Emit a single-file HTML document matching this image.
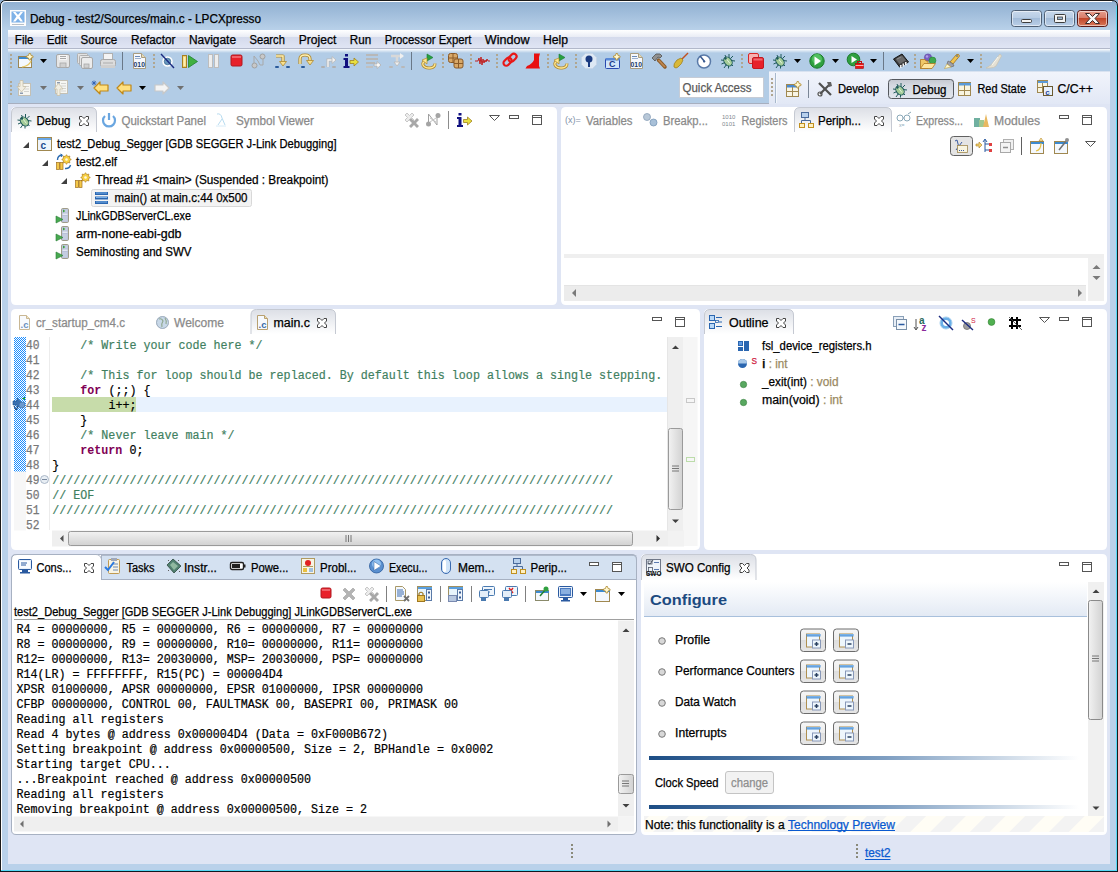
<!DOCTYPE html>
<html><head><meta charset="utf-8"><title>Debug - test2/Sources/main.c - LPCXpresso</title>
<style>html,body{margin:0;padding:0;width:1118px;height:872px;overflow:hidden;background:#b9d1ea}svg text{white-space:pre}</style>
</head><body><svg width="1118" height="872" viewBox="0 0 1118 872" style="display:block"><defs><linearGradient id="gTitle" x1="0" y1="0" x2="0" y2="1"><stop offset="0" stop-color="#8eaed0"/><stop offset="1" stop-color="#bad2ea"/></linearGradient><linearGradient id="gMenu" x1="0" y1="0" x2="0" y2="1"><stop offset="0" stop-color="#ffffff"/><stop offset="0.385" stop-color="#e9ecf5"/><stop offset="0.39" stop-color="#d4daec"/><stop offset="1" stop-color="#e0e5f4"/></linearGradient><linearGradient id="gTbTop" x1="0" y1="0" x2="0" y2="1"><stop offset="0" stop-color="#fbfcfe"/><stop offset="1" stop-color="#b2cce6"/></linearGradient><linearGradient id="gTabSel" x1="0" y1="0" x2="0" y2="1"><stop offset="0" stop-color="#dcdfe6"/><stop offset="1" stop-color="#ffffff"/></linearGradient><linearGradient id="gTabAct" x1="0" y1="0" x2="0" y2="1"><stop offset="0" stop-color="#d4e2f2"/><stop offset="1" stop-color="#d4e2f2"/></linearGradient><linearGradient id="gCfg" x1="0" y1="0" x2="0" y2="1"><stop offset="0" stop-color="#ffffff"/><stop offset="1" stop-color="#e3eaf4"/></linearGradient><linearGradient id="gSepBar" x1="0" y1="0" x2="1" y2="0"><stop offset="0" stop-color="#1c4d85"/><stop offset="0.55" stop-color="#7f9fc2"/><stop offset="1" stop-color="#ffffff"/></linearGradient><linearGradient id="gBtn" x1="0" y1="0" x2="0" y2="1"><stop offset="0" stop-color="#f6f6f6"/><stop offset="0.5" stop-color="#ececec"/><stop offset="0.5" stop-color="#dedede"/><stop offset="1" stop-color="#e6e6e6"/></linearGradient><linearGradient id="gThumbV" x1="0" y1="0" x2="1" y2="0"><stop offset="0" stop-color="#f2f2f2"/><stop offset="1" stop-color="#d2d2d2"/></linearGradient><linearGradient id="gThumbH" x1="0" y1="0" x2="0" y2="1"><stop offset="0" stop-color="#f2f2f2"/><stop offset="1" stop-color="#d2d2d2"/></linearGradient><linearGradient id="gWinBtn" x1="0" y1="0" x2="0" y2="1"><stop offset="0" stop-color="#c9d9ec"/><stop offset="0.5" stop-color="#b6cbe3"/><stop offset="0.5" stop-color="#a3bcd9"/><stop offset="1" stop-color="#bcd0e8"/></linearGradient><linearGradient id="gClose" x1="0" y1="0" x2="0" y2="1"><stop offset="0" stop-color="#e8a090"/><stop offset="0.5" stop-color="#d67a66"/><stop offset="0.5" stop-color="#c2462a"/><stop offset="1" stop-color="#d87a5c"/></linearGradient><linearGradient id="gPersp" x1="0" y1="0" x2="0" y2="1"><stop offset="0" stop-color="#f1f4fb"/><stop offset="1" stop-color="#e1e7f5"/></linearGradient><linearGradient id="gPBtn" x1="0" y1="0" x2="0" y2="1"><stop offset="0" stop-color="#c4c8d0"/><stop offset="0.3" stop-color="#d4d8e0"/><stop offset="1" stop-color="#e2e6ee"/></linearGradient><pattern id="pHatch" width="2" height="2" patternUnits="userSpaceOnUse"><rect width="2" height="2" fill="#ffffff"/><rect width="1" height="1" fill="#1a8cff"/><rect x="1" y="1" width="1" height="1" fill="#1a8cff"/></pattern><pattern id="pStripe" width="28" height="28" patternUnits="userSpaceOnUse" patternTransform="rotate(45)"><rect width="28" height="28" fill="#f3f3f3"/><rect width="14" height="28" fill="#fffdf5"/></pattern></defs><rect x="0" y="0" width="1118" height="872" fill="#b9d1ea" /><rect x="0" y="0" width="1118" height="31" fill="url(#gTitle)" /><path d="M0.5,872 L0.5,6 Q0.5,0.5 6,0.5 L1112,0.5 Q1117.5,0.5 1117.5,6 L1117.5,872" fill="none" stroke="#1a1a1a" stroke-width="1" /><line x1="0" y1="871.5" x2="1118" y2="871.5" stroke="#101820" stroke-width="1" /><line x1="1.5" y1="6" x2="1.5" y2="871" stroke="#eaf2fb" stroke-width="1" /><path d="M1.5,871 L1.5,6 Q1.5,1.5 6,1.5 L1112,1.5" fill="none" stroke="#ffffff" stroke-width="1" /><line x1="1116.5" y1="6" x2="1116.5" y2="871" stroke="#55d8f5" stroke-width="1" /><line x1="1" y1="870.5" x2="1117" y2="870.5" stroke="#55d8f5" stroke-width="1" /><rect x="10" y="10" width="16" height="16" fill="#fdfdfd" /><rect x="11.5" y="11.5" width="13" height="11" fill="#7eb2e8" /><path d="M13,12 L15.5,12 L18,15 L20.5,12 L23,12 L19.5,16.5 L23,21.5 L20.5,21.5 L18,18.5 L15.5,21.5 L13,21.5 L16.5,16.5 Z" fill="#fff" /><line x1="12" y1="24.5" x2="24" y2="24.5" stroke="#b8c0c8" stroke-width="1" /><text x="30" y="23" font-family='"Liberation Sans", sans-serif' font-size="12" fill="#000" font-weight="normal" textLength="231" lengthAdjust="spacingAndGlyphs" stroke="#000" stroke-width="0.25" >Debug - test2/Sources/main.c - LPCXpresso</text><rect x="1011.5" y="10.5" width="30" height="16" fill="url(#gWinBtn)" stroke="#4f6075" stroke-width="1" rx="3" /><rect x="1012.5" y="11.5" width="28" height="14" fill="none" stroke="rgba(255,255,255,0.55)" stroke-width="1" rx="2" /><rect x="1044.5" y="10.5" width="30" height="16" fill="url(#gWinBtn)" stroke="#4f6075" stroke-width="1" rx="3" /><rect x="1045.5" y="11.5" width="28" height="14" fill="none" stroke="rgba(255,255,255,0.55)" stroke-width="1" rx="2" /><rect x="1077.5" y="10.5" width="30" height="16" fill="url(#gClose)" stroke="#5a1a18" stroke-width="1" rx="3" /><rect x="1078.5" y="11.5" width="28" height="14" fill="none" stroke="rgba(255,255,255,0.55)" stroke-width="1" rx="2" /><rect x="1021.5" y="19.5" width="10" height="3" fill="#f4f4f4" stroke="#3c3c3c" stroke-width="1" rx="1" /><rect x="1054.5" y="14.5" width="11" height="8" fill="#f4f4f4" stroke="#3c3c3c" stroke-width="1" rx="1" /><rect x="1057.5" y="17" width="5" height="2.5" fill="#9bb4d0" stroke="#3c3c3c" stroke-width="0.8" /><path d="M1085.5,13.5 L1089.5,13.5 L1092.5,16.5 L1095.5,13.5 L1099.5,13.5 L1095,18.5 L1099.5,23.5 L1095.5,23.5 L1092.5,20.5 L1089.5,23.5 L1085.5,23.5 L1090,18.5 Z" fill="#f6f6f6" stroke="#3a2a2a" stroke-width="1" /><rect x="8" y="30" width="1102" height="18" fill="url(#gMenu)" /><line x1="8" y1="48.5" x2="1110" y2="48.5" stroke="#b2b8ca" stroke-width="1" /><text x="14.8" y="43.5" font-family='"Liberation Sans", sans-serif' font-size="12" fill="#000" font-weight="normal" textLength="18.7" lengthAdjust="spacingAndGlyphs" stroke="#000" stroke-width="0.25" >File</text><text x="46.7" y="43.5" font-family='"Liberation Sans", sans-serif' font-size="12" fill="#000" font-weight="normal" textLength="20.3" lengthAdjust="spacingAndGlyphs" stroke="#000" stroke-width="0.25" >Edit</text><text x="80.5" y="43.5" font-family='"Liberation Sans", sans-serif' font-size="12" fill="#000" font-weight="normal" textLength="36.7" lengthAdjust="spacingAndGlyphs" stroke="#000" stroke-width="0.25" >Source</text><text x="131.0" y="43.5" font-family='"Liberation Sans", sans-serif' font-size="12" fill="#000" font-weight="normal" textLength="44.5" lengthAdjust="spacingAndGlyphs" stroke="#000" stroke-width="0.25" >Refactor</text><text x="188.9" y="43.5" font-family='"Liberation Sans", sans-serif' font-size="12" fill="#000" font-weight="normal" textLength="47.2" lengthAdjust="spacingAndGlyphs" stroke="#000" stroke-width="0.25" >Navigate</text><text x="249.5" y="43.5" font-family='"Liberation Sans", sans-serif' font-size="12" fill="#000" font-weight="normal" textLength="35.4" lengthAdjust="spacingAndGlyphs" stroke="#000" stroke-width="0.25" >Search</text><text x="298.8" y="43.5" font-family='"Liberation Sans", sans-serif' font-size="12" fill="#000" font-weight="normal" textLength="37.5" lengthAdjust="spacingAndGlyphs" stroke="#000" stroke-width="0.25" >Project</text><text x="349.8" y="43.5" font-family='"Liberation Sans", sans-serif' font-size="12" fill="#000" font-weight="normal" textLength="21.4" lengthAdjust="spacingAndGlyphs" stroke="#000" stroke-width="0.25" >Run</text><text x="384.7" y="43.5" font-family='"Liberation Sans", sans-serif' font-size="12" fill="#000" font-weight="normal" textLength="86.8" lengthAdjust="spacingAndGlyphs" stroke="#000" stroke-width="0.25" >Processor Expert</text><text x="484.8" y="43.5" font-family='"Liberation Sans", sans-serif' font-size="12" fill="#000" font-weight="normal" textLength="44.7" lengthAdjust="spacingAndGlyphs" stroke="#000" stroke-width="0.25" >Window</text><text x="543.0" y="43.5" font-family='"Liberation Sans", sans-serif' font-size="12" fill="#000" font-weight="normal" textLength="25.1" lengthAdjust="spacingAndGlyphs" stroke="#000" stroke-width="0.25" >Help</text><rect x="8" y="49" width="1102" height="55" fill="#b2cce6" /><rect x="8" y="49" width="1102" height="4" fill="url(#gTbTop)" /><line x1="8" y1="103.5" x2="769" y2="103.5" stroke="#a7afbf" stroke-width="1" /><path d="M769,106 L769,72 L1110,72 L1110,106 Z" fill="url(#gPersp)" /><line x1="769" y1="71.5" x2="1110" y2="71.5" stroke="#d8e2f0" stroke-width="1" /><line x1="775.5" y1="73" x2="775.5" y2="103" stroke="#a8b8cc" stroke-width="1" /><line x1="776.5" y1="73" x2="776.5" y2="103" stroke="#f4f8fc" stroke-width="1" /><rect x="8" y="104" width="1102" height="760" fill="#dfe5f4" /><path d="M11,300 L11,112 Q11,107 16,107 L552,107 Q557,107 557,112 L557,300 Q557,305 552,305 L16,305 Q11,305 11,300 Z" fill="#fff" /><path d="M561,300 L561,112 Q561,107 566,107 L1102,107 Q1107,107 1107,112 L1107,300 Q1107,305 1102,305 L566,305 Q561,305 561,300 Z" fill="#fff" /><path d="M11,545 L11,314 Q11,309 16,309 L695,309 Q700,309 700,314 L700,545 Q700,550 695,550 L16,550 Q11,550 11,545 Z" fill="#fff" /><path d="M704,545 L704,314 Q704,309 709,309 L1102,309 Q1107,309 1107,314 L1107,545 Q1107,550 1102,550 L709,550 Q704,550 704,545 Z" fill="#fff" /><path d="M11.5,830 L11.5,559 Q11.5,554.5 16,554.5 L632,554.5 Q636.5,554.5 636.5,559 L636.5,830 Q636.5,834.5 632,834.5 L16,834.5 Q11.5,834.5 11.5,830 Z" fill="#fff" stroke="#a7b1c2" stroke-width="1" /><path d="M641,830 L641,559 Q641,554 646,554 L1102,554 Q1107,554 1107,559 L1107,830 Q1107,835 1102,835 L646,835 Q641,835 641,830 Z" fill="#fff" /><rect x="10" y="54" width="2" height="2" fill="#b0a690" /><rect x="10" y="58" width="2" height="2" fill="#b0a690" /><rect x="10" y="62" width="2" height="2" fill="#b0a690" /><rect x="10" y="66" width="2" height="2" fill="#b0a690" /><g transform="translate(18,53)" ><rect x="0.5" y="3.5" width="13" height="11" fill="#f4f8fd" stroke="#9a8654" stroke-width="1"/><rect x="1" y="4" width="12" height="2" fill="#3c8ad0"/><path d="M4,14 Q11,13 13,8" fill="none" stroke="#e8c860" stroke-width="1.2" /><path d="M11,0.5 L12.5,0.5 L13,2.5 L15,3 L15,4.5 L13,5 L12.5,7 L11,7 L10.5,5 L8.5,4.5 L8.5,3 L10.5,2.5 Z" fill="#fff8d0" stroke="#b08a30" stroke-width="0.8" /></g><path d="M40,59 L47,59 L43.5,63 Z" fill="#000" /><g transform="translate(55,53)" ><rect x="1.5" y="1.5" width="13" height="13" fill="#e6e6e6" stroke="#a8a8a8" stroke-width="1" rx="1.5"/><rect x="4" y="2" width="8" height="5" fill="#f6f6f6"/><line x1="5" y1="3.5" x2="11" y2="3.5" stroke="#a8a8a8" stroke-width="1"/><line x1="5" y1="5.5" x2="11" y2="5.5" stroke="#a8a8a8" stroke-width="1"/><rect x="5" y="10" width="6" height="4.5" fill="#d0d0d0" stroke="#a8a8a8" stroke-width="0.8"/></g><g transform="translate(77,53)" ><rect x="0.5" y="0.5" width="10" height="10" fill="#e2e2e2" stroke="#b0b0b0" stroke-width="1" rx="1"/><rect x="2.5" y="2.5" width="10" height="10" fill="#e6e6e6" stroke="#b0b0b0" stroke-width="1" rx="1"/><rect x="4.5" y="4.5" width="11" height="11" fill="#ececec" stroke="#a8a8a8" stroke-width="1" rx="1.5"/><rect x="7" y="11" width="5" height="4" fill="#d0d0d0" stroke="#a8a8a8" stroke-width="0.8"/></g><g transform="translate(100,53)" ><rect x="3.5" y="0.5" width="9" height="6" fill="#f4f4f4" stroke="#b0b0b0" stroke-width="1"/><rect x="0.5" y="6.5" width="15" height="7" fill="#dcdcdc" stroke="#a8a8a8" stroke-width="1" rx="2"/><rect x="3" y="9" width="10" height="2" fill="#c4c4c4"/><rect x="1" y="12" width="14" height="3" fill="#cfcfcf"/></g><line x1="122.5" y1="52" x2="122.5" y2="70" stroke="#6a7888" stroke-width="1" /><g transform="translate(132,53)" ><path d="M1.5,0.5 L9.5,0.5 L13.5,4.5 L13.5,15.5 L1.5,15.5 Z" fill="#f6f8fc" stroke="#a89c80" stroke-width="1" /><path d="M9.5,0.5 L9.5,4.5 L13.5,4.5" fill="#e8dcb8" stroke="#a89c80" stroke-width="1" /><line x1="3" y1="3.5" x2="8" y2="3.5" stroke="#6a8ab8" stroke-width="1"/><line x1="3" y1="5.5" x2="9" y2="5.5" stroke="#9ab0d0" stroke-width="1"/><text x="1.6" y="14.2" font-family='"Liberation Sans", sans-serif' font-size="6.8" fill="#1a3a6a" font-weight="bold">010</text></g><rect x="153" y="54" width="2" height="2" fill="#b0a690" /><rect x="153" y="58" width="2" height="2" fill="#b0a690" /><rect x="153" y="62" width="2" height="2" fill="#b0a690" /><rect x="153" y="66" width="2" height="2" fill="#b0a690" /><g transform="translate(160,53)" ><circle cx="7.5" cy="8.5" r="4.5" fill="#e8f0f6" stroke="#ffffff" stroke-width="1.5"/><circle cx="7.5" cy="8.5" r="3.2" fill="#6a9ac0" stroke="#3c6a90" stroke-width="0.8"/><line x1="1" y1="1" x2="14" y2="15" stroke="#1a2a80" stroke-width="1.4"/></g><g transform="translate(182,53)" ><rect x="0.5" y="2.5" width="4" height="12" fill="#f0d070" stroke="#a88020" stroke-width="1"/><rect x="1.5" y="4" width="2" height="9" fill="#fff0b0"/><path d="M6.5,2.5 L15.5,8.5 L6.5,14.5 Z" fill="#40b040" stroke="#208030" stroke-width="0.8" /></g><g transform="translate(208,53)" ><rect x="0.5" y="1.5" width="4" height="13" fill="#eeeeee" stroke="#bdbdbd" stroke-width="1"/><rect x="6.5" y="1.5" width="4" height="13" fill="#eeeeee" stroke="#bdbdbd" stroke-width="1"/></g><g transform="translate(230.5,54.5)" ><rect x="0.5" y="0.5" width="11" height="11" fill="#e8202a" stroke="#b01820" stroke-width="1" rx="1.5"/><rect x="1.5" y="1.5" width="9" height="2" fill="#f06068"/></g><g transform="translate(251,53)" ><circle cx="3.5" cy="12.5" r="2.5" fill="#c8c8c8" stroke="#a0a0a0" stroke-width="1"/><circle cx="11.5" cy="3.5" r="2.5" fill="#c8c8c8" stroke="#a0a0a0" stroke-width="1"/><path d="M3,10 L3,3 L7,8 L9,12 L12,12 L12,6" fill="none" stroke="#a8a8a8" stroke-width="1" /></g><g transform="translate(275,53)" ><path d="M1,3 L8,3 L8,9" fill="none" stroke="#b08a30" stroke-width="3.2" stroke-linejoin="round"/><path d="M1,3 L8,3 L8,9" fill="none" stroke="#fff0b0" stroke-width="1.4" /><path d="M4.5,8.5 L11.5,8.5 L8,13 Z" fill="#f8e090" stroke="#b08a30" stroke-width="0.8" /><rect x="0" y="13" width="4" height="2" fill="#2a5a9a" rx="1"/><rect x="11" y="13" width="4" height="2" fill="#2a5a9a" rx="1"/></g><g transform="translate(298,53)" ><path d="M2,11 L2,6 Q2,2 7,2 Q12,2 12,6 L12,8" fill="none" stroke="#b08a30" stroke-width="3.2" /><path d="M2,11 L2,6 Q2,2 7,2 Q12,2 12,6 L12,8" fill="none" stroke="#fff0b0" stroke-width="1.4" /><path d="M8.5,7.5 L15.5,7.5 L12,12 Z" fill="#f8e090" stroke="#b08a30" stroke-width="0.8" /><rect x="3" y="13" width="4" height="2" fill="#2a5a9a" rx="1"/></g><g transform="translate(321,53)" ><path d="M7,14 L7,7 L12,7" fill="none" stroke="#b8b8b8" stroke-width="3" /><path d="M7,14 L7,7 L12,7" fill="none" stroke="#f4f4f4" stroke-width="1.4" /><path d="M11,3.5 L15,7 L11,10.5 Z" fill="#f4f4f4" stroke="#b8b8b8" stroke-width="0.8" /><rect x="0" y="13" width="4" height="2" fill="#b0b0b0" rx="1"/><rect x="11" y="13" width="4" height="2" fill="#b0b0b0" rx="1"/></g><g transform="translate(343,53)" ><rect x="2" y="1" width="3" height="2.5" fill="#101080"/><path d="M0.5,5 L5,5 L5,13 L6.5,13 L6.5,15 L0.5,15 L0.5,13 L2,13 L2,7 L0.5,7 Z" fill="#101080" /><path d="M7,7.5 L11,7.5 L11,5 L15.5,9 L11,13 L11,10.5 L7,10.5 Z" fill="#e8e040" stroke="#a08020" stroke-width="0.8" /></g><g transform="translate(366,53)" ><rect x="0" y="1" width="12" height="2" fill="#b8b8b8"/><rect x="0" y="5" width="12" height="2" fill="#b8b8b8"/><rect x="0" y="9" width="9" height="2" fill="#b8b8b8"/><rect x="0" y="13" width="7" height="2" fill="#c0c0c0"/><path d="M8,11 L11,11 L11,8.5 L15,12 L11,15.5 L11,13 L8,13 Z" fill="#f8f8f8" stroke="#b0b0b0" stroke-width="0.8" /></g><g transform="translate(389,53)" ><path d="M2,3 L14,3" fill="none" stroke="#d8d8d8" stroke-width="2.5" /><path d="M8,3 L8,10" fill="none" stroke="#d8d8d8" stroke-width="2.5" /><path d="M5,9 L11,9 L8,13 Z" fill="#f0f0f0" stroke="#b8b8b8" stroke-width="0.8" /><path d="M11,0 L15,3 L11,6 Z" fill="#f0f0f0" /><rect x="0" y="13" width="4" height="2" fill="#b8b8b8" rx="1"/><rect x="12" y="13" width="4" height="2" fill="#b8b8b8" rx="1"/></g><line x1="411.5" y1="52" x2="411.5" y2="70" stroke="#6a7888" stroke-width="1" /><g transform="translate(421,53)" ><path d="M6,1 L12,4.5 L6,8 Z" fill="#28a040" stroke="#1a7a30" stroke-width="0.6" /><path d="M5,8 Q1,9 2,12 Q4,15.5 9,15 Q14,14.5 14,10.5" fill="none" stroke="#b08a30" stroke-width="3" /><path d="M5,8 Q1,9 2,12 Q4,15.5 9,15 Q14,14.5 14,10.5" fill="none" stroke="#ffe890" stroke-width="1.4" /><path d="M1,7 L6,5 L6,11 Z" fill="#ffe890" stroke="#b08a30" stroke-width="0.7" /></g><rect x="442" y="54" width="2" height="2" fill="#b0a690" /><rect x="442" y="58" width="2" height="2" fill="#b0a690" /><rect x="442" y="62" width="2" height="2" fill="#b0a690" /><rect x="442" y="66" width="2" height="2" fill="#b0a690" /><g transform="translate(448,53)" ><rect x="0.5" y="0.5" width="9" height="9" fill="#d8a868" stroke="#8a5a28" stroke-width="1" rx="2"/><line x1="0.5" y1="5" x2="9.5" y2="5" stroke="#8a5a28" stroke-width="1"/><line x1="5" y1="0.5" x2="5" y2="9.5" stroke="#8a5a28" stroke-width="1"/><rect x="6.0" y="6.0" width="9" height="9" fill="#d8a868" stroke="#8a5a28" stroke-width="1" rx="2"/><line x1="6.0" y1="10.5" x2="15.0" y2="10.5" stroke="#8a5a28" stroke-width="1"/><line x1="10.5" y1="6.0" x2="10.5" y2="15.0" stroke="#8a5a28" stroke-width="1"/></g><rect x="470" y="54" width="2" height="2" fill="#b0a690" /><rect x="470" y="58" width="2" height="2" fill="#b0a690" /><rect x="470" y="62" width="2" height="2" fill="#b0a690" /><rect x="470" y="66" width="2" height="2" fill="#b0a690" /><g transform="translate(475,53)" ><path d="M0,8 L3,8 L4,5 L5,11 L6,4 L7,12 L8,6 L9,10 L10,7 L11,9 L12,6 L13,8 L15,8" fill="none" stroke="#c02020" stroke-width="1" /></g><rect x="496" y="54" width="2" height="2" fill="#b0a690" /><rect x="496" y="58" width="2" height="2" fill="#b0a690" /><rect x="496" y="62" width="2" height="2" fill="#b0a690" /><rect x="496" y="66" width="2" height="2" fill="#b0a690" /><g transform="translate(502,53)" ><rect x="1" y="6" width="9" height="5.5" fill="none" stroke="#e81818" stroke-width="2.2" rx="2.75" transform="rotate(-45 5.5 8.75)"/><rect x="6" y="2" width="9" height="5.5" fill="none" stroke="#e81818" stroke-width="2.2" rx="2.75" transform="rotate(-45 10.5 4.75)"/></g><g transform="translate(525,53)" ><path d="M9,0.5 L15,0.5 L14,4 L14,13 L15,15.5 L0.5,15.5 L2,13 Q7,11 9,7 Z" fill="#e81010" /></g><rect x="547" y="54" width="2" height="2" fill="#b0a690" /><rect x="547" y="58" width="2" height="2" fill="#b0a690" /><rect x="547" y="62" width="2" height="2" fill="#b0a690" /><rect x="547" y="66" width="2" height="2" fill="#b0a690" /><g transform="translate(553,53)" ><path d="M6,1 L12,4.5 L6,8 Z" fill="#28a040" stroke="#1a7a30" stroke-width="0.6" /><path d="M5,8 Q1,9 2,12 Q4,15.5 9,15 Q14,14.5 14,10.5" fill="none" stroke="#b08a30" stroke-width="3" /><path d="M5,8 Q1,9 2,12 Q4,15.5 9,15 Q14,14.5 14,10.5" fill="none" stroke="#ffe890" stroke-width="1.4" /><path d="M1,7 L6,5 L6,11 Z" fill="#ffe890" stroke="#b08a30" stroke-width="0.7" /></g><rect x="575" y="54" width="2" height="2" fill="#b0a690" /><rect x="575" y="58" width="2" height="2" fill="#b0a690" /><rect x="575" y="62" width="2" height="2" fill="#b0a690" /><rect x="575" y="66" width="2" height="2" fill="#b0a690" /><g transform="translate(581,53)" ><path d="M4.5,0.5 L11.5,0.5 L15.5,4.5 L15.5,11.5 L11.5,15.5 L4.5,15.5 L0.5,11.5 L0.5,4.5 Z" fill="#dde8f4" stroke="#c4d2e4" stroke-width="0.8" /><circle cx="8" cy="6" r="3.5" fill="#1a3a80"/><rect x="7" y="8" width="2" height="6" fill="#1a3a80"/></g><g transform="translate(605,53)" ><rect x="0.5" y="5.5" width="14" height="10" fill="#d0e4f8" stroke="#2a4ab0" stroke-width="1" rx="1"/><rect x="1" y="5" width="14" height="2.5" fill="#5a8ad8"/><text x="4" y="14" font-family='"Liberation Sans", sans-serif' font-size="9" fill="#1a3a8a" font-weight="bold">C</text><path d="M11,0.5 L12.5,0.5 L13,2.5 L15,3 L15,4.5 L13,5 L12.5,7 L11,7 L10.5,5 L8.5,4.5 L8.5,3 L10.5,2.5 Z" fill="#fff8d0" stroke="#b08a30" stroke-width="0.8" /></g><g transform="translate(629,53)" ><path d="M1.5,0.5 L9.5,0.5 L13.5,4.5 L13.5,15.5 L1.5,15.5 Z" fill="#f6f8fc" stroke="#a89c80" stroke-width="1" /><path d="M9.5,0.5 L9.5,4.5 L13.5,4.5" fill="#e8dcb8" stroke="#a89c80" stroke-width="1" /><line x1="3" y1="3.5" x2="8" y2="3.5" stroke="#6a8ab8" stroke-width="1"/><line x1="3" y1="5.5" x2="9" y2="5.5" stroke="#9ab0d0" stroke-width="1"/><text x="1.6" y="14.2" font-family='"Liberation Sans", sans-serif' font-size="6.8" fill="#1a3a6a" font-weight="bold">010</text></g><g transform="translate(651,53)" ><path d="M7.5,7 L14,14" fill="none" stroke="#8a5a28" stroke-width="3.5" stroke-linecap="round"/><path d="M7.5,7 L14,14" fill="none" stroke="#c08850" stroke-width="1.8" /><path d="M1,5 L5,1 L9,1 L11,3 L9,5 L7,4 L4,8 Z" fill="#909090" stroke="#505050" stroke-width="0.8" /></g><g transform="translate(673,53)" ><line x1="9" y1="6" x2="15" y2="0" stroke="#c05020" stroke-width="1.5"/><path d="M1,14 Q0,11 4,7 L8,5 L10,7 Q9,11 5,14 Q3,16 1,14 Z" fill="#d8b838" stroke="#a08020" stroke-width="0.8" /></g><g transform="translate(696,53)" ><circle cx="8" cy="8.5" r="6.5" fill="#ffffff" stroke="#5a7aa8" stroke-width="1.5"/><line x1="4" y1="3" x2="9" y2="9" stroke="#3a5a90" stroke-width="1.5"/><circle cx="8" cy="8.5" r="1" fill="#3a5a90"/></g><g transform="translate(720,53)" ><line x1="1" y1="7" x2="5" y2="7.5" stroke="#1f5a5a" stroke-width="1"/><line x1="1.5" y1="11" x2="5" y2="9.5" stroke="#1f5a5a" stroke-width="1"/><line x1="4" y1="15" x2="6.5" y2="11.5" stroke="#1f5a5a" stroke-width="1"/><line x1="9" y1="1" x2="9" y2="5" stroke="#1f5a5a" stroke-width="1"/><line x1="5" y1="2" x2="6.5" y2="5.5" stroke="#1f5a5a" stroke-width="1"/><line x1="15" y1="8" x2="11" y2="7.5" stroke="#1f5a5a" stroke-width="1"/><line x1="13" y1="13" x2="10.5" y2="10.5" stroke="#1f5a5a" stroke-width="1"/><line x1="8.5" y1="15.5" x2="8.5" y2="11.5" stroke="#1f5a5a" stroke-width="1"/><line x1="13" y1="3" x2="10.5" y2="5.5" stroke="#1f5a5a" stroke-width="1"/><ellipse cx="8" cy="8.5" rx="3.6" ry="5" transform="rotate(-40 8 8.5)" fill="#a4cc98" stroke="#1f5a5a" stroke-width="1"/><line x1="6.5" y1="6" x2="10" y2="10.5" stroke="#e4f4dc" stroke-width="1"/><circle cx="5.5" cy="5.5" r="1.2" fill="#1f5a5a"/></g><rect x="741" y="54" width="2" height="2" fill="#b0a690" /><rect x="741" y="58" width="2" height="2" fill="#b0a690" /><rect x="741" y="62" width="2" height="2" fill="#b0a690" /><rect x="741" y="66" width="2" height="2" fill="#b0a690" /><g transform="translate(748,53)" ><rect x="0.5" y="0.5" width="10" height="10" fill="#f8b0b0" stroke="#d82828" stroke-width="1" rx="1.5"/><rect x="4.5" y="4.5" width="11" height="11" fill="#e8202a" stroke="#c01820" stroke-width="1" rx="1.5"/><rect x="5.5" y="5.5" width="9" height="2" fill="#f06870"/></g><g transform="translate(772,53)" ><line x1="1" y1="7" x2="5" y2="7.5" stroke="#1f5a5a" stroke-width="1"/><line x1="1.5" y1="11" x2="5" y2="9.5" stroke="#1f5a5a" stroke-width="1"/><line x1="4" y1="15" x2="6.5" y2="11.5" stroke="#1f5a5a" stroke-width="1"/><line x1="9" y1="1" x2="9" y2="5" stroke="#1f5a5a" stroke-width="1"/><line x1="5" y1="2" x2="6.5" y2="5.5" stroke="#1f5a5a" stroke-width="1"/><line x1="15" y1="8" x2="11" y2="7.5" stroke="#1f5a5a" stroke-width="1"/><line x1="13" y1="13" x2="10.5" y2="10.5" stroke="#1f5a5a" stroke-width="1"/><line x1="8.5" y1="15.5" x2="8.5" y2="11.5" stroke="#1f5a5a" stroke-width="1"/><line x1="13" y1="3" x2="10.5" y2="5.5" stroke="#1f5a5a" stroke-width="1"/><ellipse cx="8" cy="8.5" rx="3.6" ry="5" transform="rotate(-40 8 8.5)" fill="#a4cc98" stroke="#1f5a5a" stroke-width="1"/><line x1="6.5" y1="6" x2="10" y2="10.5" stroke="#e4f4dc" stroke-width="1"/><circle cx="5.5" cy="5.5" r="1.2" fill="#1f5a5a"/></g><path d="M794,59 L801,59 L797.5,63 Z" fill="#000" /><g transform="translate(809,53)" ><circle cx="8" cy="8" r="7.2" fill="#30a040" stroke="#1a7a2a" stroke-width="1"/><circle cx="8" cy="6" r="5" fill="#50c060"/><path d="M5.5,3.5 L12,8 L5.5,12.5 Z" fill="#ffffff" /></g><path d="M832,59 L839,59 L835.5,63 Z" fill="#000" /><g transform="translate(847,53)" ><circle cx="6.5" cy="6.5" r="6.3" fill="#30a040" stroke="#1a7a2a" stroke-width="1"/><path d="M4.5,3 L10,6.5 L4.5,10 Z" fill="#ffffff" /><rect x="8.5" y="10.5" width="8" height="5" fill="#e81818" stroke="#a01010" stroke-width="0.6"/><rect x="10.5" y="8.5" width="4" height="2" fill="none" stroke="#c01010" stroke-width="1"/><line x1="8.5" y1="12.5" x2="16.5" y2="12.5" stroke="#ffb0b0" stroke-width="1"/></g><path d="M870,59 L877,59 L873.5,63 Z" fill="#000" /><line x1="883.5" y1="52" x2="883.5" y2="70" stroke="#6a7888" stroke-width="1" /><g transform="translate(893,53)" ><path d="M0.5,6 L9,1 L15.5,9 L7,14.5 Z" fill="#3c3c3c" stroke="#151515" stroke-width="1" /><path d="M2.5,6 L9,2.5 L13,7.5 L6.5,11 Z" fill="#6a6a6a" /><rect x="7" y="12" width="1.6" height="3" fill="#f0f0f0"/><rect x="9.5" y="10.5" width="1.6" height="3" fill="#f0f0f0"/><rect x="12" y="9" width="1.6" height="3" fill="#f0f0f0"/><line x1="4" y1="6" x2="8" y2="4" stroke="#909090" stroke-width="1"/></g><rect x="914" y="54" width="2" height="2" fill="#b0a690" /><rect x="914" y="58" width="2" height="2" fill="#b0a690" /><rect x="914" y="62" width="2" height="2" fill="#b0a690" /><rect x="914" y="66" width="2" height="2" fill="#b0a690" /><g transform="translate(920,53)" ><circle cx="8" cy="4.5" r="3.6" fill="#7a60c0" stroke="#5a40a0" stroke-width="0.6"/><circle cx="12.5" cy="7.5" r="3.4" fill="#40a850" stroke="#208030" stroke-width="0.6"/><circle cx="7" cy="3.5" r="1.2" fill="#b0a0e8"/><path d="M0.5,6.5 L5,6.5 L6,8 L8,8 L8,15.5 L0.5,15.5 Z" fill="#f0c868" stroke="#b07820" stroke-width="0.8" /><path d="M4,10.5 L15.5,10.5 L12,15.5 L0.5,15.5 Z" fill="#ffe6a0" stroke="#b07820" stroke-width="0.8" /></g><g transform="translate(944,53)" ><path d="M6,9 L12.5,1.5 Q15,0.5 15.5,3 L9,11 Z" fill="#f0c450" stroke="#a07020" stroke-width="0.8" /><path d="M4,8 L6,9 L9,11 L10,13 L7,14 L3,11 Z" fill="#a0a0a8" stroke="#606060" stroke-width="0.6" /><path d="M0.5,15.5 L3,11 L7,14 Z" fill="#fff8d0" stroke="#c0a040" stroke-width="0.6" /><circle cx="13" cy="3" r="0.8" fill="#2050a0"/></g><path d="M967,59 L974,59 L970.5,63 Z" fill="#000" /><rect x="980" y="54" width="2" height="2" fill="#b0a690" /><rect x="980" y="58" width="2" height="2" fill="#b0a690" /><rect x="980" y="62" width="2" height="2" fill="#b0a690" /><rect x="980" y="66" width="2" height="2" fill="#b0a690" /><g transform="translate(986,53)" ><path d="M0,15 L5,12 L14,1 L15.5,3 L10,13 Q8,15 4,15 Z" fill="#e4e0d4" stroke="#c8c4b4" stroke-width="0.8" /><line x1="6" y1="12" x2="12" y2="4" stroke="#f8f8f0" stroke-width="1"/></g><rect x="10" y="81" width="2" height="2" fill="#b0a690" /><rect x="10" y="85" width="2" height="2" fill="#b0a690" /><rect x="10" y="89" width="2" height="2" fill="#b0a690" /><rect x="10" y="93" width="2" height="2" fill="#b0a690" /><g transform="translate(17,80)" ><rect x="1.5" y="3.5" width="12" height="12" fill="#f6f6f2" stroke="#c4c0b4" stroke-width="1"/><line x1="7" y1="6.5" x2="12" y2="6.5" stroke="#d4d4d0" stroke-width="1"/><line x1="7" y1="9" x2="12" y2="9" stroke="#d4d4d0" stroke-width="1"/><line x1="7" y1="11.5" x2="12" y2="11.5" stroke="#d4d4d0" stroke-width="1"/><rect x="3" y="12.5" width="3" height="1.5" fill="#8a9ab0"/><path d="M3,0.5 L6,0.5 L6,6.5 L9,6.5 L4.5,12 L0,6.5 L3,6.5 Z" fill="#f2eee2" stroke="#c8c0a8" stroke-width="0.8" /></g><path d="M40,86 L47,86 L43.5,90 Z" fill="#707070" /><g transform="translate(54,80)" ><rect x="1.5" y="0.5" width="12" height="13" fill="#f6f6f2" stroke="#c4c0b4" stroke-width="1"/><line x1="7" y1="3.5" x2="12" y2="3.5" stroke="#d4d4d0" stroke-width="1"/><line x1="7" y1="6" x2="12" y2="6" stroke="#d4d4d0" stroke-width="1"/><line x1="7" y1="8.5" x2="12" y2="8.5" stroke="#d4d4d0" stroke-width="1"/><line x1="7" y1="11" x2="12" y2="11" stroke="#d4d4d0" stroke-width="1"/><rect x="3" y="2" width="3" height="1.5" fill="#8a9ab0"/><path d="M3,15.5 L6,15.5 L6,9 L9,9 L4.5,3.5 L0,9 L3,9 Z" fill="#f2eee2" stroke="#c8c0a8" stroke-width="0.8" /></g><path d="M77,86 L84,86 L80.5,90 Z" fill="#707070" /><g transform="translate(91,80)" ><g transform="translate(2,0)"><path d="M1,8 L7,2 L7,5 L15,5 L15,11 L7,11 L7,14 Z" fill="#ffe080" stroke="#c08818" stroke-width="1.2" stroke-linejoin="round"/></g><line x1="0.5" y1="3" x2="5.5" y2="3" stroke="#2a5ab0" stroke-width="0.8"/><line x1="3" y1="0.5" x2="3" y2="5.5" stroke="#2a5ab0" stroke-width="0.8"/><line x1="1.2" y1="1.2" x2="4.8" y2="4.8" stroke="#2a5ab0" stroke-width="0.8"/><line x1="4.8" y1="1.2" x2="1.2" y2="4.8" stroke="#2a5ab0" stroke-width="0.8"/></g><g transform="translate(116,80)" ><path d="M1,8 L7,2 L7,5 L15,5 L15,11 L7,11 L7,14 Z" fill="#ffe080" stroke="#c08818" stroke-width="1.2" stroke-linejoin="round"/></g><path d="M139,86 L146,86 L142.5,90 Z" fill="#000" /><g transform="translate(154,80)" ><path d="M15,8 L9,2 L9,5 L1,5 L1,11 L9,11 L9,14 Z" fill="#f4f4f4" stroke="#c8c8c8" stroke-width="1.2" stroke-linejoin="round"/></g><path d="M177,86 L184,86 L180.5,90 Z" fill="#707070" /><rect x="679.5" y="77.5" width="84" height="20" fill="#ffffff" stroke="#c6ccd6" stroke-width="1" /><text x="682.5" y="92" font-family='"Liberation Sans", sans-serif' font-size="12" fill="#5a5a5a" font-weight="normal" textLength="69" lengthAdjust="spacingAndGlyphs" stroke="#5a5a5a" stroke-width="0.25" >Quick Access</text><rect x="771" y="78" width="2" height="2" fill="#b0a690" /><rect x="771" y="82" width="2" height="2" fill="#b0a690" /><rect x="771" y="86" width="2" height="2" fill="#b0a690" /><rect x="771" y="90" width="2" height="2" fill="#b0a690" /><rect x="771" y="94" width="2" height="2" fill="#b0a690" /><g transform="translate(786,81)" ><rect x="0.5" y="3.5" width="12" height="12" fill="#f8f4e4" stroke="#a08850" stroke-width="1"/><rect x="1" y="4" width="12" height="2.5" fill="#4a8ad0"/><line x1="6.5" y1="6" x2="6.5" y2="15" stroke="#a08850" stroke-width="1"/><line x1="1" y1="10.5" x2="12" y2="10.5" stroke="#a08850" stroke-width="1"/><path d="M11,0.5 L12.5,0.5 L13,2.5 L15,3 L15,4.5 L13,5 L12.5,7 L11,7 L10.5,5 L8.5,4.5 L8.5,3 L10.5,2.5 Z" fill="#fff8d0" stroke="#b08a30" stroke-width="0.8" /></g><line x1="808.5" y1="80" x2="808.5" y2="98" stroke="#7a8696" stroke-width="1" /><g transform="translate(817,81)" ><line x1="2" y1="2" x2="14" y2="14" stroke="#505050" stroke-width="2.2"/><circle cx="3" cy="13" r="2" fill="#fff" stroke="#505050" stroke-width="1.2"/><line x1="3" y1="13" x2="12" y2="4" stroke="#505050" stroke-width="2.2"/><path d="M10,1 L14,1 L15,5 L12,6 Z" fill="#606060" /></g><text x="838" y="93" font-family='"Liberation Sans", sans-serif' font-size="12" fill="#000" font-weight="normal" textLength="41" lengthAdjust="spacingAndGlyphs" stroke="#000" stroke-width="0.25" >Develop</text><rect x="888.5" y="79.5" width="65" height="19" fill="url(#gPBtn)" stroke="#55585e" stroke-width="1" rx="3" /><g transform="translate(892,82)" ><line x1="1" y1="7" x2="5" y2="7.5" stroke="#1f5a5a" stroke-width="1"/><line x1="1.5" y1="11" x2="5" y2="9.5" stroke="#1f5a5a" stroke-width="1"/><line x1="4" y1="15" x2="6.5" y2="11.5" stroke="#1f5a5a" stroke-width="1"/><line x1="9" y1="1" x2="9" y2="5" stroke="#1f5a5a" stroke-width="1"/><line x1="5" y1="2" x2="6.5" y2="5.5" stroke="#1f5a5a" stroke-width="1"/><line x1="15" y1="8" x2="11" y2="7.5" stroke="#1f5a5a" stroke-width="1"/><line x1="13" y1="13" x2="10.5" y2="10.5" stroke="#1f5a5a" stroke-width="1"/><line x1="8.5" y1="15.5" x2="8.5" y2="11.5" stroke="#1f5a5a" stroke-width="1"/><line x1="13" y1="3" x2="10.5" y2="5.5" stroke="#1f5a5a" stroke-width="1"/><ellipse cx="8" cy="8.5" rx="3.6" ry="5" transform="rotate(-40 8 8.5)" fill="#a4cc98" stroke="#1f5a5a" stroke-width="1"/><line x1="6.5" y1="6" x2="10" y2="10.5" stroke="#e4f4dc" stroke-width="1"/><circle cx="5.5" cy="5.5" r="1.2" fill="#1f5a5a"/></g><text x="912.5" y="94" font-family='"Liberation Sans", sans-serif' font-size="12" fill="#000" font-weight="normal" textLength="34" lengthAdjust="spacingAndGlyphs" stroke="#000" stroke-width="0.25" >Debug</text><g transform="translate(958,82)" ><rect x="0.5" y="0.5" width="12" height="13" fill="#f8f4e0" stroke="#a08850" stroke-width="1"/><rect x="1" y="1" width="12" height="2.5" fill="#5a9ad8"/><line x1="6.5" y1="3" x2="6.5" y2="13.5" stroke="#a08850" stroke-width="1"/><line x1="1" y1="8.5" x2="12.5" y2="8.5" stroke="#a08850" stroke-width="1"/></g><text x="977.5" y="93" font-family='"Liberation Sans", sans-serif' font-size="12" fill="#000" font-weight="normal" textLength="48.5" lengthAdjust="spacingAndGlyphs" stroke="#000" stroke-width="0.25" >Red State</text><g transform="translate(1037,80)" ><rect x="0.5" y="0.5" width="10" height="12" fill="#f8f4e0" stroke="#a08850" stroke-width="1"/><rect x="1" y="1" width="10" height="2" fill="#5a9ad8"/><line x1="5.5" y1="3" x2="5.5" y2="12" stroke="#a08850" stroke-width="1"/><line x1="1" y1="7.5" x2="10" y2="7.5" stroke="#a08850" stroke-width="1"/><rect x="6.5" y="6.5" width="9" height="9" fill="#e8f0fa" stroke="#6a5a30" stroke-width="1"/><text x="8.2" y="14.5" font-family='"Liberation Sans", sans-serif' font-size="8" fill="#2a4a9a" font-weight="bold">c</text></g><text x="1057.5" y="93" font-family='"Liberation Sans", sans-serif' font-size="12" fill="#000" font-weight="normal" textLength="35.5" lengthAdjust="spacingAndGlyphs" stroke="#000" stroke-width="0.25" >C/C++</text><path d="M11.5,132 L11.5,113 Q11.5,107.5 17,107.5 L91,107.5 Q96.5,107.5 96.5,113 L96.5,132" fill="url(#gTabSel)" stroke="#c5c9d2" stroke-width="1" /><g transform="translate(16.5,113)" ><line x1="1" y1="7" x2="5" y2="7.5" stroke="#1f5a5a" stroke-width="1"/><line x1="1.5" y1="11" x2="5" y2="9.5" stroke="#1f5a5a" stroke-width="1"/><line x1="4" y1="15" x2="6.5" y2="11.5" stroke="#1f5a5a" stroke-width="1"/><line x1="9" y1="1" x2="9" y2="5" stroke="#1f5a5a" stroke-width="1"/><line x1="5" y1="2" x2="6.5" y2="5.5" stroke="#1f5a5a" stroke-width="1"/><line x1="15" y1="8" x2="11" y2="7.5" stroke="#1f5a5a" stroke-width="1"/><line x1="13" y1="13" x2="10.5" y2="10.5" stroke="#1f5a5a" stroke-width="1"/><line x1="8.5" y1="15.5" x2="8.5" y2="11.5" stroke="#1f5a5a" stroke-width="1"/><line x1="13" y1="3" x2="10.5" y2="5.5" stroke="#1f5a5a" stroke-width="1"/><ellipse cx="8" cy="8.5" rx="3.6" ry="5" transform="rotate(-40 8 8.5)" fill="#a4cc98" stroke="#1f5a5a" stroke-width="1"/><line x1="6.5" y1="6" x2="10" y2="10.5" stroke="#e4f4dc" stroke-width="1"/><circle cx="5.5" cy="5.5" r="1.2" fill="#1f5a5a"/></g><text x="36.5" y="125" font-family='"Liberation Sans", sans-serif' font-size="12" fill="#000" font-weight="normal" textLength="34" lengthAdjust="spacingAndGlyphs" stroke="#000" stroke-width="0.25" >Debug</text><path d="M79.5,116.5 L82,116.5 L84,118.5 L86,116.5 L88.5,116.5 L88.5,119 L86.5,121 L88.5,123 L88.5,125.5 L86,125.5 L84,123.5 L82,125.5 L79.5,125.5 L79.5,123 L81.5,121 L79.5,119 Z" fill="#fff" stroke="#444" stroke-width="1" /><g transform="translate(101,112)" ><path d="M4,4 A6,6 0 1 0 12,4" fill="none" stroke="#6aa6e0" stroke-width="2.2" /><line x1="8" y1="1" x2="8" y2="8" stroke="#6aa6e0" stroke-width="2.2"/></g><text x="121.5" y="125" font-family='"Liberation Sans", sans-serif' font-size="12" fill="#8a8a8a" font-weight="normal" textLength="84.5" lengthAdjust="spacingAndGlyphs" stroke="#8a8a8a" stroke-width="0.25" >Quickstart Panel</text><g transform="translate(214,112)" ><path d="M3,2 Q7,1 8,6 L11,13 M8,7 L4,13" fill="none" stroke="#b8dcf0" stroke-width="1" /><line x1="2" y1="14" x2="12" y2="14" stroke="#d8ecf8" stroke-width="1"/></g><text x="236" y="125" font-family='"Liberation Sans", sans-serif' font-size="12" fill="#8a8a8a" font-weight="normal" textLength="78" lengthAdjust="spacingAndGlyphs" stroke="#8a8a8a" stroke-width="0.25" >Symbol Viewer</text><g transform="translate(404,112)" ><path d="M1,3 L3,1 L5.5,3.5 L8,1 L10,3 L7.5,5.5 L10,8 L8,10 L5.5,7.5 L3,10 L1,8 L3.5,5.5 Z" fill="#ececec" stroke="#c8c8c8" stroke-width="1" /><path d="M5,8 L7,6 L10,9 L13,6 L15,8 L12,11 L15,14 L13,16 L10,13 L7,16 L5,14 L8,11 Z" fill="#a8a8a8" /></g><g transform="translate(426,112)" ><circle cx="2.5" cy="12" r="2.5" fill="#a4a4a4"/><circle cx="12" cy="3.5" r="2.5" fill="#a4a4a4"/><path d="M2.5,10 L2.5,2 L11,13 L11,5" fill="none" stroke="#a0a0a0" stroke-width="1" /><path d="M4,6 L10,10 M4,10 L10,6" fill="none" stroke="#c4c4c4" stroke-width="1" /></g><line x1="448.5" y1="111" x2="448.5" y2="129" stroke="#8c8c8c" stroke-width="1" /><g transform="translate(456.5,112)" ><rect x="2" y="1" width="3" height="2.5" fill="#101080"/><path d="M0.5,5 L5,5 L5,13 L6.5,13 L6.5,15 L0.5,15 L0.5,13 L2,13 L2,7 L0.5,7 Z" fill="#101080" /><path d="M7,7.5 L11,7.5 L11,5 L15.5,9 L11,13 L11,10.5 L7,10.5 Z" fill="#e8e040" stroke="#a08020" stroke-width="0.8" /></g><path d="M489.5,115.5 L499.5,115.5 L494.5,120.5 Z" fill="#fff" stroke="#555" stroke-width="1" /><rect x="509.5" y="115.5" width="9" height="3" fill="#fff" stroke="#555" stroke-width="1" /><rect x="532.5" y="115.5" width="9" height="9" fill="#fff" stroke="#555" stroke-width="1" /><line x1="532" y1="117.5" x2="542" y2="117.5" stroke="#555" stroke-width="1" /><path d="M29,142 L29,148 L23,148 Z" fill="#404040" /><g transform="translate(37,137)" ><rect x="0.5" y="0.5" width="14" height="13" fill="#eef4fb" stroke="#a08850" stroke-width="1"/><rect x="1" y="1" width="13" height="2" fill="#6aa8e8"/><text x="3.5" y="11.5" font-family='"Liberation Sans", sans-serif' font-size="10" fill="#1a4a90" font-weight="bold">c</text></g><text x="57" y="148" font-family='"Liberation Sans", sans-serif' font-size="12" fill="#000" font-weight="normal" textLength="279.5" lengthAdjust="spacingAndGlyphs" stroke="#000" stroke-width="0.25" >test2_Debug_Segger [GDB SEGGER J-Link Debugging]</text><path d="M48,160 L48,166 L42,166 Z" fill="#404040" /><g transform="translate(56,154)" ><rect x="0.5" y="8.5" width="3" height="7" fill="#f4c848" stroke="#a07020" stroke-width="0.7"/><rect x="4" y="8.5" width="3" height="7" fill="#f4c848" stroke="#a07020" stroke-width="0.7"/><path d="M15.30,5.50 L13.46,6.72 L13.89,8.89 L11.72,8.46 L10.50,10.30 L9.28,8.46 L7.11,8.89 L7.54,6.72 L5.70,5.50 L7.54,4.28 L7.11,2.11 L9.28,2.54 L10.50,0.70 L11.72,2.54 L13.89,2.11 L13.46,4.28 Z" fill="#f8d040" stroke="#b08020" stroke-width="0.7" /><circle cx="10.5" cy="5.5" r="1.3" fill="#fff8e0"/><path d="M1.5,6 Q1.5,1.5 6,1" fill="none" stroke="#2a6ab0" stroke-width="1.4" /><path d="M4.5,0 L6.5,1 L5,3" fill="none" stroke="#2a6ab0" stroke-width="1" /><path d="M9,14.5 Q13.5,15 14.5,11" fill="none" stroke="#2a6ab0" stroke-width="1.4" /></g><text x="76" y="166" font-family='"Liberation Sans", sans-serif' font-size="12" fill="#000" font-weight="normal" textLength="41" lengthAdjust="spacingAndGlyphs" stroke="#000" stroke-width="0.25" >test2.elf</text><path d="M67,178 L67,184 L61,184 Z" fill="#404040" /><g transform="translate(75,172)" ><rect x="0.5" y="8.5" width="3" height="7" fill="#f4c848" stroke="#a07020" stroke-width="0.7"/><rect x="4" y="8.5" width="3" height="7" fill="#f4c848" stroke="#a07020" stroke-width="0.7"/><path d="M6,9 L9,7" fill="none" stroke="#a07020" stroke-width="1" /><path d="M15.30,5.50 L13.46,6.72 L13.89,8.89 L11.72,8.46 L10.50,10.30 L9.28,8.46 L7.11,8.89 L7.54,6.72 L5.70,5.50 L7.54,4.28 L7.11,2.11 L9.28,2.54 L10.50,0.70 L11.72,2.54 L13.89,2.11 L13.46,4.28 Z" fill="#f8d040" stroke="#b08020" stroke-width="0.7" /><circle cx="10.5" cy="5.5" r="1.3" fill="#fff8e0"/></g><text x="95.5" y="184" font-family='"Liberation Sans", sans-serif' font-size="12" fill="#000" font-weight="normal" textLength="233" lengthAdjust="spacingAndGlyphs" stroke="#000" stroke-width="0.25" >Thread #1 &lt;main&gt; (Suspended : Breakpoint)</text><rect x="91.5" y="189.5" width="160" height="17" fill="#f3f3f3" stroke="#d8d8d8" stroke-width="1" rx="2" /><g transform="translate(95,191)" ><rect x="0" y="1" width="13" height="3" fill="#2a66b0"/><rect x="0" y="5.5" width="13" height="3" fill="#2a66b0"/><rect x="0" y="10" width="13" height="3" fill="#2a66b0"/><rect x="1" y="1.5" width="11" height="1" fill="#7ab0e8"/><rect x="1" y="6" width="11" height="1" fill="#7ab0e8"/><rect x="1" y="10.5" width="11" height="1" fill="#7ab0e8"/></g><text x="114.5" y="202" font-family='"Liberation Sans", sans-serif' font-size="12" fill="#000" font-weight="normal" textLength="133" lengthAdjust="spacingAndGlyphs" stroke="#000" stroke-width="0.25" >main() at main.c:44 0x500</text><g transform="translate(55,207)" ><rect x="6.5" y="1.5" width="7" height="14" fill="#b8c0d8" stroke="#a09c88" stroke-width="1" rx="1.2"/><rect x="7.5" y="2.5" width="5" height="3" fill="#c8d0e4"/><path d="M8,2.5 L10.5,4 L8,5.5 Z" fill="#40a040" /><rect x="7.5" y="6.5" width="5" height="1.5" fill="#e4e8f2"/><rect x="7.5" y="9" width="5" height="5.5" fill="#c4cce0"/><path d="M1,9 L8,12.5 L1,16 Z" fill="#48a850" stroke="#2a8038" stroke-width="0.6" /></g><text x="76" y="220" font-family='"Liberation Sans", sans-serif' font-size="12" fill="#000" font-weight="normal" textLength="115" lengthAdjust="spacingAndGlyphs" stroke="#000" stroke-width="0.25" >JLinkGDBServerCL.exe</text><g transform="translate(55,225)" ><rect x="6.5" y="1.5" width="7" height="14" fill="#b8c0d8" stroke="#a09c88" stroke-width="1" rx="1.2"/><rect x="7.5" y="2.5" width="5" height="3" fill="#c8d0e4"/><path d="M8,2.5 L10.5,4 L8,5.5 Z" fill="#40a040" /><rect x="7.5" y="6.5" width="5" height="1.5" fill="#e4e8f2"/><rect x="7.5" y="9" width="5" height="5.5" fill="#c4cce0"/><path d="M1,9 L8,12.5 L1,16 Z" fill="#48a850" stroke="#2a8038" stroke-width="0.6" /></g><text x="76" y="238" font-family='"Liberation Sans", sans-serif' font-size="12" fill="#000" font-weight="normal" textLength="105.5" lengthAdjust="spacingAndGlyphs" stroke="#000" stroke-width="0.25" >arm-none-eabi-gdb</text><g transform="translate(55,243)" ><rect x="6.5" y="1.5" width="7" height="14" fill="#b8c0d8" stroke="#a09c88" stroke-width="1" rx="1.2"/><rect x="7.5" y="2.5" width="5" height="3" fill="#c8d0e4"/><path d="M8,2.5 L10.5,4 L8,5.5 Z" fill="#40a040" /><rect x="7.5" y="6.5" width="5" height="1.5" fill="#e4e8f2"/><rect x="7.5" y="9" width="5" height="5.5" fill="#c4cce0"/><path d="M1,9 L8,12.5 L1,16 Z" fill="#48a850" stroke="#2a8038" stroke-width="0.6" /></g><text x="76" y="256" font-family='"Liberation Sans", sans-serif' font-size="12" fill="#000" font-weight="normal" textLength="115.5" lengthAdjust="spacingAndGlyphs" stroke="#000" stroke-width="0.25" >Semihosting and SWV</text><path d="M794.5,132 L794.5,113 Q794.5,107.5 800,107.5 L886,107.5 Q891.5,107.5 891.5,113 L891.5,132" fill="url(#gTabSel)" stroke="#c5c9d2" stroke-width="1" /><g transform="translate(565,112)" ><text x="0" y="11" font-family='"Liberation Sans", sans-serif' font-size="9" fill="#8090a8" font-weight="normal">(x)=</text></g><text x="586" y="125" font-family='"Liberation Sans", sans-serif' font-size="12" fill="#8a8a8a" font-weight="normal" textLength="46.5" lengthAdjust="spacingAndGlyphs" stroke="#8a8a8a" stroke-width="0.25" >Variables</text><g transform="translate(643,113)" ><circle cx="4" cy="4" r="3.5" fill="#b8c8d8" stroke="#8aa0b8" stroke-width="0.8"/><circle cx="10.5" cy="9.5" r="3.5" fill="#a8c0d8" stroke="#7a98b8" stroke-width="0.8"/></g><text x="663" y="125" font-family='"Liberation Sans", sans-serif' font-size="12" fill="#8a8a8a" font-weight="normal" textLength="45" lengthAdjust="spacingAndGlyphs" stroke="#8a8a8a" stroke-width="0.25" >Breakp...</text><g transform="translate(722,112)" ><text x="0" y="7" font-family='"Liberation Sans", sans-serif' font-size="6" fill="#808890" font-weight="normal">1010</text><text x="0" y="14" font-family='"Liberation Sans", sans-serif' font-size="6" fill="#808890" font-weight="normal">0101</text></g><text x="741.5" y="125" font-family='"Liberation Sans", sans-serif' font-size="12" fill="#8a8a8a" font-weight="normal" textLength="46" lengthAdjust="spacingAndGlyphs" stroke="#8a8a8a" stroke-width="0.25" >Registers</text><g transform="translate(799,112)" ><rect x="2.5" y="0.5" width="7" height="5" fill="#b8d0ec" stroke="#4a6a9a" stroke-width="1"/><line x1="6" y1="5.5" x2="6" y2="8" stroke="#4a6a9a" stroke-width="1"/><line x1="2.5" y1="8.5" x2="11.5" y2="8.5" stroke="#4a6a9a" stroke-width="1"/><line x1="2.5" y1="8.5" x2="2.5" y2="11" stroke="#4a6a9a" stroke-width="1"/><line x1="11.5" y1="8.5" x2="11.5" y2="11" stroke="#4a6a9a" stroke-width="1"/><rect x="0.5" y="11.5" width="5" height="4" fill="#fff0c0" stroke="#c09020" stroke-width="1"/><rect x="9.5" y="11.5" width="5" height="4" fill="#fff0c0" stroke="#c09020" stroke-width="1"/></g><text x="818" y="125" font-family='"Liberation Sans", sans-serif' font-size="12" fill="#000" font-weight="normal" textLength="43" lengthAdjust="spacingAndGlyphs" stroke="#000" stroke-width="0.25" >Periph...</text><path d="M874.5,116.5 L877,116.5 L879,118.5 L881,116.5 L883.5,116.5 L883.5,119 L881.5,121 L883.5,123 L883.5,125.5 L881,125.5 L879,123.5 L877,125.5 L874.5,125.5 L874.5,123 L876.5,121 L874.5,119 Z" fill="#fff" stroke="#444" stroke-width="1" /><g transform="translate(896,112)" ><circle cx="4" cy="6" r="3" fill="none" stroke="#8aa8b8" stroke-width="1"/><circle cx="11" cy="6" r="3" fill="none" stroke="#8aa8b8" stroke-width="1"/><line x1="7" y1="6" x2="8" y2="6" stroke="#8aa8b8" stroke-width="1"/><line x1="12" y1="2" x2="15" y2="0" stroke="#8aa8b8" stroke-width="1"/><text x="3" y="15" font-family='"Liberation Sans", sans-serif' font-size="5" fill="#8aa8b8" font-weight="normal">x=</text></g><text x="916" y="125" font-family='"Liberation Sans", sans-serif' font-size="12" fill="#8a8a8a" font-weight="normal" textLength="47" lengthAdjust="spacingAndGlyphs" stroke="#8a8a8a" stroke-width="0.25" >Express...</text><g transform="translate(974,112)" ><rect x="0" y="6" width="6" height="9" fill="#70b0a0"/><rect x="5" y="8" width="5" height="7" fill="#a0c890"/><path d="M9,15 L12,2 L15,15 Z" fill="#e8b860" /></g><text x="994" y="125" font-family='"Liberation Sans", sans-serif' font-size="12" fill="#8a8a8a" font-weight="normal" textLength="46" lengthAdjust="spacingAndGlyphs" stroke="#8a8a8a" stroke-width="0.25" >Modules</text><rect x="1059.5" y="115.5" width="9" height="3" fill="#fff" stroke="#555" stroke-width="1" /><rect x="1082.5" y="115.5" width="9" height="9" fill="#fff" stroke="#555" stroke-width="1" /><line x1="1082" y1="117.5" x2="1092" y2="117.5" stroke="#555" stroke-width="1" /><rect x="950.5" y="136.5" width="22" height="19" fill="#e4e4e4" stroke="#606060" stroke-width="1" rx="3" /><g transform="translate(953,138)" ><path d="M2,3 L4,2 M4,2 Q5,8 8,13 M3,12 L9,4" fill="none" stroke="#3a5aa0" stroke-width="1" /><rect x="4.5" y="7.5" width="10" height="7" fill="#f8f4e0" stroke="#a08850" stroke-width="0.8"/><rect x="6" y="12" width="1" height="1" fill="#3a5aa0"/><rect x="8" y="12" width="1" height="1" fill="#3a5aa0"/><rect x="10" y="12" width="1" height="1" fill="#3a5aa0"/></g><g transform="translate(976,138)" ><path d="M0,6 L3,6 L3,4 L6,7 L3,10 L3,8 L0,8 Z" fill="#f0d070" stroke="#b08020" stroke-width="0.6" /><line x1="9" y1="2" x2="9" y2="14" stroke="#2a5aa0" stroke-width="1"/><line x1="9" y1="6" x2="13" y2="6" stroke="#2a5aa0" stroke-width="1"/><line x1="9" y1="12" x2="13" y2="12" stroke="#2a5aa0" stroke-width="1"/><rect x="13" y="5" width="3" height="3" fill="#e04040"/><rect x="13" y="11" width="3" height="3" fill="#e04040"/><path d="M7,4 L9,1 L11,4" fill="none" stroke="#2a5aa0" stroke-width="1" /></g><g transform="translate(1000,138)" ><rect x="3.5" y="1.5" width="10" height="10" fill="#f0f0f0" stroke="#b0b0b0" stroke-width="1"/><rect x="0.5" y="4.5" width="10" height="10" fill="#f4f4f4" stroke="#a8a8a8" stroke-width="1"/><line x1="3" y1="9.5" x2="8" y2="9.5" stroke="#909090" stroke-width="1.5"/></g><line x1="1021.5" y1="137" x2="1021.5" y2="155" stroke="#606060" stroke-width="1" /><g transform="translate(1030,138)" ><rect x="0.5" y="3.5" width="13" height="12" fill="#f4f8fd" stroke="#a08850" stroke-width="1"/><rect x="1" y="4" width="13" height="2" fill="#3c8ad0"/><path d="M6,13 Q11,12 11,5" fill="none" stroke="#e8c040" stroke-width="1.2" /><path d="M9,3 L11,0 L13,3 Z" fill="#fff0b0" stroke="#b08020" stroke-width="0.6" /></g><g transform="translate(1054,138)" ><rect x="0.5" y="3.5" width="13" height="12" fill="#f4f8fd" stroke="#a08850" stroke-width="1"/><rect x="1" y="4" width="13" height="2" fill="#3c8ad0"/><line x1="5" y1="12" x2="13" y2="2" stroke="#707070" stroke-width="1.5"/><circle cx="13" cy="2" r="2" fill="#909090"/></g><path d="M1085.5,141.5 L1095.5,141.5 L1090.5,146.5 Z" fill="#fff" stroke="#555" stroke-width="1" /><rect x="564" y="254" width="540" height="4" fill="#efefef" /><rect x="1088" y="258" width="16" height="27" fill="#f0f0f0" /><path d="M1092.5,269 L1096.5,265 L1100.5,269 Z" fill="#7a7a7a" /><path d="M1092.5,276 L1096.5,280 L1100.5,276 Z" fill="#7a7a7a" /><rect x="564" y="285" width="522" height="16" fill="#ececec" /><rect x="564" y="285" width="522" height="1" fill="#e4e4e4" /><rect x="1088" y="285" width="16" height="16" fill="#f0f0f0" /><path d="M572,293 L576,289 L576,297 Z" fill="#7a7a7a" /><path d="M1082,293 L1078,289 L1078,297 Z" fill="#7a7a7a" /><path d="M251.0,334 L251.0,315 Q251.0,309.5 256.5,309.5 L330,309.5 Q335.5,309.5 335.5,315 L335.5,334" fill="url(#gTabSel)" stroke="#c5c9d2" stroke-width="1" /><g transform="translate(19,315)"  opacity="0.75"><path d="M0.5,0.5 L7.5,0.5 L10.5,3.5 L10.5,14.5 L0.5,14.5 Z" fill="#f6f9fd" stroke="#b8a070" stroke-width="1" /><path d="M7.5,0.5 L7.5,3.5 L10.5,3.5" fill="#f0e0b0" stroke="#b8a070" stroke-width="1" /><text x="1.5" y="12.5" font-family='"Liberation Sans", sans-serif' font-size="9.5" fill="#3a6aa8" font-weight="bold">.c</text></g><text x="36" y="327" font-family='"Liberation Sans", sans-serif' font-size="12" fill="#8a8a8a" font-weight="normal" textLength="89" lengthAdjust="spacingAndGlyphs" stroke="#8a8a8a" stroke-width="0.25" >cr_startup_cm4.c</text><g transform="translate(156,315)" ><circle cx="6.5" cy="7.5" r="6" fill="#c8d8e8" stroke="#a0b0c0" stroke-width="0.8"/><path d="M3,4 Q6,3 7,6 Q5,9 6,12 M9,3 Q11,6 10,9" fill="none" stroke="#90a890" stroke-width="1.2" /><circle cx="6.5" cy="7.5" r="6" fill="none" stroke="#98a8b8" stroke-width="0.6"/></g><text x="174" y="327" font-family='"Liberation Sans", sans-serif' font-size="12" fill="#8a8a8a" font-weight="normal" textLength="50" lengthAdjust="spacingAndGlyphs" stroke="#8a8a8a" stroke-width="0.25" >Welcome</text><g transform="translate(257,315)" ><path d="M0.5,0.5 L7.5,0.5 L10.5,3.5 L10.5,14.5 L0.5,14.5 Z" fill="#f6f9fd" stroke="#b8a070" stroke-width="1" /><path d="M7.5,0.5 L7.5,3.5 L10.5,3.5" fill="#f0e0b0" stroke="#b8a070" stroke-width="1" /><text x="1.5" y="12.5" font-family='"Liberation Sans", sans-serif' font-size="9.5" fill="#3a6aa8" font-weight="bold">.c</text></g><text x="273.5" y="327" font-family='"Liberation Sans", sans-serif' font-size="12" fill="#000" font-weight="normal" textLength="36.5" lengthAdjust="spacingAndGlyphs" stroke="#000" stroke-width="0.25" >main.c</text><path d="M317.5,318.5 L320,318.5 L322,320.5 L324,318.5 L326.5,318.5 L326.5,321 L324.5,323 L326.5,325 L326.5,327.5 L324,327.5 L322,325.5 L320,327.5 L317.5,327.5 L317.5,325 L319.5,323 L317.5,321 Z" fill="#fff" stroke="#444" stroke-width="1" /><rect x="652.5" y="317.5" width="9" height="3" fill="#fff" stroke="#555" stroke-width="1" /><rect x="675.5" y="317.5" width="9" height="9" fill="#fff" stroke="#555" stroke-width="1" /><line x1="675" y1="319.5" x2="685" y2="319.5" stroke="#555" stroke-width="1" /><rect x="14" y="337" width="12" height="135" fill="url(#pHatch)" /><rect x="14" y="471.5" width="12" height="59" fill="#f7f7f7" /><line x1="49.5" y1="337" x2="49.5" y2="530" stroke="#ececec" stroke-width="1" /><text x="26" y="348.6" font-family='"Liberation Mono", monospace' font-size="12" fill="#787878" font-weight="normal" textLength="13.5" lengthAdjust="spacingAndGlyphs" stroke="#787878" stroke-width="0.25" >40</text><text x="26" y="363.6" font-family='"Liberation Mono", monospace' font-size="12" fill="#787878" font-weight="normal" textLength="13.5" lengthAdjust="spacingAndGlyphs" stroke="#787878" stroke-width="0.25" >41</text><text x="26" y="378.6" font-family='"Liberation Mono", monospace' font-size="12" fill="#787878" font-weight="normal" textLength="13.5" lengthAdjust="spacingAndGlyphs" stroke="#787878" stroke-width="0.25" >42</text><text x="26" y="393.6" font-family='"Liberation Mono", monospace' font-size="12" fill="#787878" font-weight="normal" textLength="13.5" lengthAdjust="spacingAndGlyphs" stroke="#787878" stroke-width="0.25" >43</text><text x="26" y="408.6" font-family='"Liberation Mono", monospace' font-size="12" fill="#787878" font-weight="normal" textLength="13.5" lengthAdjust="spacingAndGlyphs" stroke="#787878" stroke-width="0.25" >44</text><text x="26" y="423.6" font-family='"Liberation Mono", monospace' font-size="12" fill="#787878" font-weight="normal" textLength="13.5" lengthAdjust="spacingAndGlyphs" stroke="#787878" stroke-width="0.25" >45</text><text x="26" y="438.6" font-family='"Liberation Mono", monospace' font-size="12" fill="#787878" font-weight="normal" textLength="13.5" lengthAdjust="spacingAndGlyphs" stroke="#787878" stroke-width="0.25" >46</text><text x="26" y="453.6" font-family='"Liberation Mono", monospace' font-size="12" fill="#787878" font-weight="normal" textLength="13.5" lengthAdjust="spacingAndGlyphs" stroke="#787878" stroke-width="0.25" >47</text><text x="26" y="468.6" font-family='"Liberation Mono", monospace' font-size="12" fill="#787878" font-weight="normal" textLength="13.5" lengthAdjust="spacingAndGlyphs" stroke="#787878" stroke-width="0.25" >48</text><text x="26" y="483.6" font-family='"Liberation Mono", monospace' font-size="12" fill="#787878" font-weight="normal" textLength="13.5" lengthAdjust="spacingAndGlyphs" stroke="#787878" stroke-width="0.25" >49</text><text x="26" y="498.6" font-family='"Liberation Mono", monospace' font-size="12" fill="#787878" font-weight="normal" textLength="13.5" lengthAdjust="spacingAndGlyphs" stroke="#787878" stroke-width="0.25" >50</text><text x="26" y="513.6" font-family='"Liberation Mono", monospace' font-size="12" fill="#787878" font-weight="normal" textLength="13.5" lengthAdjust="spacingAndGlyphs" stroke="#787878" stroke-width="0.25" >51</text><text x="26" y="528.6" font-family='"Liberation Mono", monospace' font-size="12" fill="#787878" font-weight="normal" textLength="13.5" lengthAdjust="spacingAndGlyphs" stroke="#787878" stroke-width="0.25" >52</text><circle cx="44.5" cy="479.5" r="4" fill="#e8eef4" stroke="#9aaabc" stroke-width="0.8"/><line x1="42" y1="479.5" x2="47" y2="479.5" stroke="#7a8aa0" stroke-width="1" /><g transform="translate(13,397)" ><path d="M0,4 L4,4 L4,1 L9,6 L4,11 L4,8 L0,8 Z" fill="#3a70b0" stroke="#20508a" stroke-width="0.6" /><circle cx="9" cy="8" r="3" fill="#6a9ad0" stroke="#3a6aa0" stroke-width="0.6"/><path d="M1,9 L3,13 L5,10" fill="none" stroke="#1a3a6a" stroke-width="1" /><rect x="9" y="1" width="3" height="1" fill="#20a040"/><rect x="11" y="0" width="1" height="3" fill="#20a040"/></g><rect x="52" y="397" width="615.5" height="15" fill="#e8f2fe" /><rect x="52" y="397" width="84" height="15" fill="#c7dcaa" /><text x="80.34" y="348.6" font-family='"Liberation Mono", monospace' font-size="12" fill="#3f7f5f" font-weight="normal" textLength="182.26" lengthAdjust="spacingAndGlyphs" stroke="#3f7f5f" stroke-width="0.2">/* Write your code here */</text><text x="80.34" y="378.6" font-family='"Liberation Mono", monospace' font-size="12" fill="#3f7f5f" font-weight="normal" textLength="581.83" lengthAdjust="spacingAndGlyphs" stroke="#3f7f5f" stroke-width="0.2">/* This for loop should be replaced. By default this loop allows a single stepping.</text><text x="80.34" y="393.6" font-family='"Liberation Mono", monospace' font-size="12" fill="#7f0055" font-weight="bold" textLength="21.03" lengthAdjust="spacingAndGlyphs">for</text><text x="108.38" y="393.6" font-family='"Liberation Mono", monospace' font-size="12" fill="#000" font-weight="normal" textLength="42.06" lengthAdjust="spacingAndGlyphs" stroke="#000" stroke-width="0.2">(;;) {</text><text x="108.38" y="408.6" font-family='"Liberation Mono", monospace' font-size="12" fill="#000" font-weight="normal" textLength="28.04" lengthAdjust="spacingAndGlyphs" stroke="#000" stroke-width="0.2">i++;</text><text x="80.34" y="423.6" font-family='"Liberation Mono", monospace' font-size="12" fill="#000" font-weight="normal" textLength="7.01" lengthAdjust="spacingAndGlyphs" stroke="#000" stroke-width="0.2">}</text><text x="80.34" y="438.6" font-family='"Liberation Mono", monospace' font-size="12" fill="#3f7f5f" font-weight="normal" textLength="154.22" lengthAdjust="spacingAndGlyphs" stroke="#3f7f5f" stroke-width="0.2">/* Never leave main */</text><text x="80.34" y="453.6" font-family='"Liberation Mono", monospace' font-size="12" fill="#7f0055" font-weight="bold" textLength="42.06" lengthAdjust="spacingAndGlyphs">return</text><text x="129.41" y="453.6" font-family='"Liberation Mono", monospace' font-size="12" fill="#000" font-weight="normal" textLength="14.02" lengthAdjust="spacingAndGlyphs" stroke="#000" stroke-width="0.2">0;</text><text x="52.30" y="468.6" font-family='"Liberation Mono", monospace' font-size="12" fill="#000" font-weight="normal" textLength="7.01" lengthAdjust="spacingAndGlyphs" stroke="#000" stroke-width="0.2">}</text><text x="52.30" y="483.6" font-family='"Liberation Mono", monospace' font-size="12" fill="#3f7f5f" font-weight="normal" textLength="560.80" lengthAdjust="spacingAndGlyphs" stroke="#3f7f5f" stroke-width="0.2">////////////////////////////////////////////////////////////////////////////////</text><text x="52.30" y="498.6" font-family='"Liberation Mono", monospace' font-size="12" fill="#3f7f5f" font-weight="normal" textLength="42.06" lengthAdjust="spacingAndGlyphs" stroke="#3f7f5f" stroke-width="0.2">// EOF</text><text x="52.30" y="513.6" font-family='"Liberation Mono", monospace' font-size="12" fill="#3f7f5f" font-weight="normal" textLength="560.80" lengthAdjust="spacingAndGlyphs" stroke="#3f7f5f" stroke-width="0.2">////////////////////////////////////////////////////////////////////////////////</text><rect x="667.5" y="337" width="16" height="194" fill="#efefef" /><line x1="667.5" y1="337" x2="667.5" y2="531" stroke="#e6e6e6" stroke-width="1" /><path d="M672,349 L675.5,345.5 L679,349 Z" fill="#404040" /><path d="M672,519.5 L675.5,523 L679,519.5 Z" fill="#404040" /><rect x="668.5" y="428.5" width="14" height="81" fill="url(#gThumbV)" stroke="#9a9a9a" stroke-width="1" rx="2" /><line x1="672" y1="466" x2="679" y2="466" stroke="#6a6a6a" stroke-width="0.9" /><line x1="672" y1="468.5" x2="679" y2="468.5" stroke="#6a6a6a" stroke-width="0.9" /><line x1="672" y1="471" x2="679" y2="471" stroke="#6a6a6a" stroke-width="0.9" /><rect x="683.5" y="337" width="14" height="209" fill="#f6f6f6" /><rect x="686.5" y="398.5" width="8" height="4" fill="none" stroke="#c8c8c8" stroke-width="1" /><rect x="686.5" y="457.5" width="8" height="4" fill="none" stroke="#bcdcaa" stroke-width="1" /><rect x="52" y="530.5" width="632" height="16" fill="#efefef" /><path d="M60,538.5 L63.5,535 L63.5,542 Z" fill="#505050" /><rect x="68.5" y="531.5" width="564" height="14" fill="url(#gThumbH)" stroke="#9a9a9a" stroke-width="1" rx="2" /><line x1="346" y1="535" x2="346" y2="542" stroke="#6a6a6a" stroke-width="0.9" /><line x1="348.5" y1="535" x2="348.5" y2="542" stroke="#6a6a6a" stroke-width="0.9" /><line x1="351" y1="535" x2="351" y2="542" stroke="#6a6a6a" stroke-width="0.9" /><path d="M660,538.5 L656.5,535 L656.5,542 Z" fill="#303030" /><rect x="668" y="531" width="16" height="15" fill="#f2f2f2" /><path d="M704.5,334 L704.5,315 Q704.5,309.5 710,309.5 L788,309.5 Q793.5,309.5 793.5,315 L793.5,334" fill="url(#gTabSel)" stroke="#c5c9d2" stroke-width="1" /><g transform="translate(709,315)" ><rect x="0.5" y="0.5" width="5" height="5" fill="#b8d8f8" stroke="#2a66b0" stroke-width="1"/><rect x="0.5" y="8.5" width="5" height="5" fill="#b8d8f8" stroke="#2a66b0" stroke-width="1"/><line x1="7" y1="2.5" x2="13" y2="2.5" stroke="#2a66b0" stroke-width="1"/><rect x="6.5" y="5.5" width="3" height="2" fill="none" stroke="#2a66b0" stroke-width="0.8"/><line x1="10" y1="7" x2="13" y2="7" stroke="#2a66b0" stroke-width="1"/><line x1="7" y1="11.5" x2="13" y2="11.5" stroke="#2a66b0" stroke-width="1"/></g><text x="729" y="327" font-family='"Liberation Sans", sans-serif' font-size="12" fill="#000" font-weight="normal" textLength="39.5" lengthAdjust="spacingAndGlyphs" stroke="#000" stroke-width="0.25" >Outline</text><path d="M776.5,318.5 L779,318.5 L781,320.5 L783,318.5 L785.5,318.5 L785.5,321 L783.5,323 L785.5,325 L785.5,327.5 L783,327.5 L781,325.5 L779,327.5 L776.5,327.5 L776.5,325 L778.5,323 L776.5,321 Z" fill="#fff" stroke="#444" stroke-width="1" /><g transform="translate(893,316)" ><rect x="0.5" y="0.5" width="10" height="10" fill="#e8eef6" stroke="#8aa0b8" stroke-width="1"/><rect x="3.5" y="3.5" width="10" height="10" fill="#f4f8fc" stroke="#7a90a8" stroke-width="1"/><line x1="5.5" y1="8.5" x2="11.5" y2="8.5" stroke="#2a5aa0" stroke-width="1.5"/></g><g transform="translate(914,316)" ><line x1="2" y1="3" x2="2" y2="13" stroke="#505050" stroke-width="1"/><path d="M0,11 L2,14 L4,11" fill="none" stroke="#505050" stroke-width="1" /><text x="5" y="8" font-family='"Liberation Sans", sans-serif' font-size="10" fill="#2a6a5a" font-weight="bold">a</text><text x="7.5" y="15" font-family='"Liberation Sans", sans-serif' font-size="10" fill="#8a2a9a" font-weight="bold">z</text></g><g transform="translate(939,316)" ><circle cx="7" cy="7" r="6" fill="#6ab0e8" stroke="#a8d0f0" stroke-width="1"/><circle cx="7" cy="7" r="3" fill="#ffffff"/><line x1="0" y1="0" x2="14" y2="14" stroke="#1a2a80" stroke-width="1.4"/></g><g transform="translate(962,316)" ><circle cx="5" cy="10" r="3.5" fill="#a0a0a0" stroke="#707070" stroke-width="0.8"/><line x1="0" y1="4" x2="11" y2="14" stroke="#1a2a80" stroke-width="1.4"/><text x="9" y="7" font-family='"Liberation Sans", sans-serif' font-size="7" fill="#d02040" font-weight="normal">S</text></g><circle cx="991.5" cy="322" r="3.4" fill="#50b050" stroke="#308030" stroke-width="0.6"/><g transform="translate(1008,316)" ><path d="M4,1 L4,13 M9,1 L9,13 M1,4 L13,4 M1,10 L13,10" fill="none" stroke="#000" stroke-width="2" /><line x1="1" y1="1" x2="14" y2="14" stroke="#404040" stroke-width="0.8"/></g><path d="M1039.5,317.5 L1049.5,317.5 L1044.5,322.5 Z" fill="#fff" stroke="#555" stroke-width="1" /><rect x="1059.5" y="317.5" width="9" height="3" fill="#fff" stroke="#555" stroke-width="1" /><rect x="1082.5" y="317.5" width="9" height="9" fill="#fff" stroke="#555" stroke-width="1" /><line x1="1082" y1="319.5" x2="1092" y2="319.5" stroke="#555" stroke-width="1" /><g transform="translate(738,341)" ><rect x="0" y="0" width="5" height="5" fill="#2a66b0"/><rect x="6" y="0" width="5" height="10" fill="#2a66b0"/><rect x="0" y="6" width="5" height="4" fill="#2a66b0"/><rect x="1" y="1" width="3" height="3" fill="#5a96e0"/></g><text x="762" y="349.5" font-family='"Liberation Sans", sans-serif' font-size="12" fill="#000" font-weight="normal" textLength="109.5" lengthAdjust="spacingAndGlyphs" stroke="#000" stroke-width="0.25" >fsl_device_registers.h</text><circle cx="742.5" cy="363.5" r="4.5" fill="#2a66b0"/><path d="M738,363.5 A4.5,4.5 0 0 1 747,363.5 Z" fill="#a8c8e8"/><text x="751.5" y="363.5" font-family='"Liberation Sans", sans-serif' font-size="9" fill="#d02040" font-weight="normal" textLength="5.5" lengthAdjust="spacingAndGlyphs" stroke="#d02040" stroke-width="0.25" >S</text><text x="762" y="367.5" font-family='"Liberation Sans", sans-serif' font-size="12" fill="#000" font-weight="normal" textLength="3.5" lengthAdjust="spacingAndGlyphs" stroke="#000" stroke-width="0.25" >i</text><text x="765.5" y="367.5" font-family='"Liberation Sans", sans-serif' font-size="12" fill="#9a8a62" font-weight="normal" textLength="22" lengthAdjust="spacingAndGlyphs" stroke="#9a8a62" stroke-width="0.25" > : int</text><circle cx="743.5" cy="384.5" r="3.2" fill="#58a860" stroke="#3a8040" stroke-width="0.6"/><text x="762" y="385.5" font-family='"Liberation Sans", sans-serif' font-size="12" fill="#000" font-weight="normal" textLength="45" lengthAdjust="spacingAndGlyphs" stroke="#000" stroke-width="0.25" >_exit(int)</text><text x="807" y="385.5" font-family='"Liberation Sans", sans-serif' font-size="12" fill="#9a8a62" font-weight="normal" textLength="31.5" lengthAdjust="spacingAndGlyphs" stroke="#9a8a62" stroke-width="0.25" > : void</text><circle cx="743.5" cy="402.5" r="3.2" fill="#58a860" stroke="#3a8040" stroke-width="0.6"/><text x="762" y="403.5" font-family='"Liberation Sans", sans-serif' font-size="12" fill="#000" font-weight="normal" textLength="57.5" lengthAdjust="spacingAndGlyphs" stroke="#000" stroke-width="0.25" >main(void)</text><text x="819.5" y="403.5" font-family='"Liberation Sans", sans-serif' font-size="12" fill="#9a8a62" font-weight="normal" textLength="23" lengthAdjust="spacingAndGlyphs" stroke="#9a8a62" stroke-width="0.25" > : int</text><path d="M101.5,555 L101.5,579.5 L636.5,579.5 L636.5,560 Q636.5,555 631.5,555 Z" fill="#d4e1f1" stroke="#a7b1c2" stroke-width="1" /><rect x="101" y="555" width="535.5" height="0.6" fill="#a7b1c2" /><path d="M11.5,580 L11.5,560 Q11.5,554.5 17,554.5 L96,554.5 Q100,554.5 101.5,559 L101.5,580" fill="#ffffff" stroke="#a7b1c2" stroke-width="1" /><rect x="12" y="579" width="89" height="2" fill="#ffffff" /><g transform="translate(18,559)" ><rect x="0.5" y="0.5" width="13" height="10" fill="#e8f0fa" stroke="#2a5aa0" stroke-width="1" rx="1"/><rect x="2" y="2" width="10" height="7" fill="#f8fbff"/><line x1="3" y1="4" x2="9" y2="4" stroke="#2a5aa0" stroke-width="1"/><line x1="3" y1="6" x2="8" y2="6" stroke="#2a5aa0" stroke-width="1"/><rect x="4" y="11" width="6" height="2" fill="#2a5aa0"/><rect x="2" y="13" width="10" height="1.5" fill="#2a5aa0"/></g><text x="36.5" y="572" font-family='"Liberation Sans", sans-serif' font-size="12" fill="#000" font-weight="normal" textLength="35" lengthAdjust="spacingAndGlyphs" stroke="#000" stroke-width="0.25" >Cons...</text><path d="M84.5,563.5 L87,563.5 L89,565.5 L91,563.5 L93.5,563.5 L93.5,566 L91.5,568 L93.5,570 L93.5,572.5 L91,572.5 L89,570.5 L87,572.5 L84.5,572.5 L84.5,570 L86.5,568 L84.5,566 Z" fill="#fff" stroke="#444" stroke-width="1" /><g transform="translate(105,558)" ><rect x="3.5" y="1.5" width="11" height="14" fill="#f8f4e4" stroke="#c09a50" stroke-width="1" rx="1"/><rect x="6" y="0" width="6" height="3" fill="#a0a8b8"/><line x1="8" y1="6" x2="13" y2="6" stroke="#6a8ab8" stroke-width="1"/><line x1="8" y1="9" x2="13" y2="9" stroke="#6a8ab8" stroke-width="1"/><line x1="8" y1="12" x2="13" y2="12" stroke="#6a8ab8" stroke-width="1"/><path d="M0,9 L3,12 L9,4" fill="none" stroke="#2a7ae0" stroke-width="2" /></g><text x="126.5" y="572" font-family='"Liberation Sans", sans-serif' font-size="12" fill="#000" font-weight="normal" textLength="28" lengthAdjust="spacingAndGlyphs" stroke="#000" stroke-width="0.25" >Tasks</text><g transform="translate(166,558)" ><path d="M1,7 L7,1 L15,8 L8,15 Z" fill="#508070" stroke="#304a40" stroke-width="0.8" /><path d="M4,7 L7,4 L12,8 L8,12 Z" fill="#90b8a0" /><path d="M3,3 L2,2 M12,3 L13,2 M3,12 L2,13 M13,13 L14,14" fill="none" stroke="#606060" stroke-width="1" /></g><text x="184" y="572" font-family='"Liberation Sans", sans-serif' font-size="12" fill="#000" font-weight="normal" textLength="33" lengthAdjust="spacingAndGlyphs" stroke="#000" stroke-width="0.25" >Instr...</text><g transform="translate(230,558)" ><rect x="0.5" y="4.5" width="13" height="7" fill="#ffffff" stroke="#202020" stroke-width="1.4" rx="1.5"/><rect x="2" y="6" width="8" height="4" fill="#202020"/><rect x="14" y="6.5" width="1.5" height="3" fill="#202020"/></g><text x="251" y="572" font-family='"Liberation Sans", sans-serif' font-size="12" fill="#000" font-weight="normal" textLength="37.5" lengthAdjust="spacingAndGlyphs" stroke="#000" stroke-width="0.25" >Powe...</text><g transform="translate(301,558)" ><rect x="0.5" y="0.5" width="13" height="15" fill="#f8f4e4" stroke="#b09a60" stroke-width="1"/><circle cx="7" cy="5" r="3" fill="#e02020"/><rect x="2" y="10" width="4" height="4" fill="#e8c040"/><rect x="8" y="10" width="4" height="4" fill="#a0c0e0"/><line x1="2" y1="8.5" x2="12" y2="8.5" stroke="#b09a60" stroke-width="1"/></g><text x="320" y="572" font-family='"Liberation Sans", sans-serif' font-size="12" fill="#000" font-weight="normal" textLength="36.5" lengthAdjust="spacingAndGlyphs" stroke="#000" stroke-width="0.25" >Probl...</text><g transform="translate(369,558)" ><circle cx="7.5" cy="8" r="7" fill="#5a90d0" stroke="#2a5a9a" stroke-width="0.8"/><circle cx="7.5" cy="6" r="4.5" fill="#90c0f0"/><path d="M5,3.5 L12,8 L5,12.5 Z" fill="#ffffff" stroke="#2a5a9a" stroke-width="0.5" /></g><text x="389" y="572" font-family='"Liberation Sans", sans-serif' font-size="12" fill="#000" font-weight="normal" textLength="38.5" lengthAdjust="spacingAndGlyphs" stroke="#000" stroke-width="0.25" >Execu...</text><g transform="translate(441,558)" ><rect x="0.5" y="0.5" width="9" height="15" fill="#d0e4f8" stroke="#3a6ab0" stroke-width="1" rx="4.5"/><rect x="2" y="2" width="3" height="12" fill="#ffffff" rx="1.5"/></g><text x="458" y="572" font-family='"Liberation Sans", sans-serif' font-size="12" fill="#000" font-weight="normal" textLength="36.5" lengthAdjust="spacingAndGlyphs" stroke="#000" stroke-width="0.25" >Mem...</text><g transform="translate(511,558)" ><rect x="2.5" y="0.5" width="7" height="5" fill="#b8d0ec" stroke="#4a6a9a" stroke-width="1"/><line x1="6" y1="5.5" x2="6" y2="8" stroke="#4a6a9a" stroke-width="1"/><line x1="2.5" y1="8.5" x2="11.5" y2="8.5" stroke="#4a6a9a" stroke-width="1"/><line x1="2.5" y1="8.5" x2="2.5" y2="11" stroke="#4a6a9a" stroke-width="1"/><line x1="11.5" y1="8.5" x2="11.5" y2="11" stroke="#4a6a9a" stroke-width="1"/><rect x="0.5" y="11.5" width="5" height="4" fill="#fff0c0" stroke="#c09020" stroke-width="1"/><rect x="9.5" y="11.5" width="5" height="4" fill="#fff0c0" stroke="#c09020" stroke-width="1"/></g><text x="530.5" y="572" font-family='"Liberation Sans", sans-serif' font-size="12" fill="#000" font-weight="normal" textLength="36.5" lengthAdjust="spacingAndGlyphs" stroke="#000" stroke-width="0.25" >Perip...</text><rect x="589.5" y="562.5" width="9" height="3" fill="#fff" stroke="#555" stroke-width="1" /><rect x="612.5" y="562.5" width="9" height="9" fill="#fff" stroke="#555" stroke-width="1" /><line x1="612" y1="564.5" x2="622" y2="564.5" stroke="#555" stroke-width="1" /><g transform="translate(320.5,587.5)" ><rect x="0.5" y="0.5" width="10" height="10" fill="#e8202a" stroke="#b01820" stroke-width="1" rx="1.5"/><rect x="1.5" y="1.5" width="8" height="2" fill="#f06068"/></g><g transform="translate(342,587)" ><path d="M1,3 L3,1 L7,5 L11,1 L13,3 L9,7 L13,11 L11,13 L7,9 L3,13 L1,11 L5,7 Z" fill="#b4b4b4" stroke="#a0a0a0" stroke-width="0.6" /></g><g transform="translate(364,586)" ><path d="M1,3 L3,1 L5.5,3.5 L8,1 L10,3 L7.5,5.5 L10,8 L8,10 L5.5,7.5 L3,10 L1,8 L3.5,5.5 Z" fill="#ececec" stroke="#c8c8c8" stroke-width="1" /><path d="M5,8 L7,6 L10,9 L13,6 L15,8 L12,11 L15,14 L13,16 L10,13 L7,16 L5,14 L8,11 Z" fill="#a8a8a8" /></g><line x1="386.5" y1="586" x2="386.5" y2="602" stroke="#808080" stroke-width="1" /><g transform="translate(395,586)" ><path d="M0.5,0.5 L7.5,0.5 L10.5,3.5 L10.5,14.5 L0.5,14.5 Z" fill="#f4f8fc" stroke="#a89868" stroke-width="1" /><line x1="2" y1="4" x2="8" y2="4" stroke="#3a6ab0" stroke-width="1"/><line x1="2" y1="6" x2="9" y2="6" stroke="#3a6ab0" stroke-width="1"/><line x1="2" y1="8" x2="9" y2="8" stroke="#3a6ab0" stroke-width="1"/><line x1="2" y1="10" x2="7" y2="10" stroke="#3a6ab0" stroke-width="1"/><path d="M9,10 L14,15 M14,10 L9,15" fill="none" stroke="#707070" stroke-width="1.8" /></g><g transform="translate(417,586)" ><rect x="0.5" y="0.5" width="14" height="14" fill="#e8f4fc" stroke="#a09060" stroke-width="1"/><rect x="1" y="1" width="14" height="2" fill="#5aa0e0"/><rect x="9.5" y="3.5" width="5" height="11" fill="#f0f6fc" stroke="#5a7aa8" stroke-width="1"/><rect x="11" y="5.5" width="2" height="2" fill="#3a5a90"/><rect x="11" y="10.5" width="2" height="2" fill="#3a5a90"/><rect x="0.5" y="9.5" width="7" height="6" fill="#e8c050" stroke="#a07820" stroke-width="1"/><path d="M2,9.5 L2,7.5 Q4,5 6,7.5 L6,9.5" fill="none" stroke="#a07820" stroke-width="1.2" /></g><line x1="440.5" y1="586" x2="440.5" y2="602" stroke="#808080" stroke-width="1" /><g transform="translate(448,586)" ><rect x="0.5" y="0.5" width="14" height="14" fill="#e8f4fc" stroke="#a09060" stroke-width="1"/><rect x="1" y="1" width="14" height="2" fill="#5aa0e0"/><rect x="9.5" y="3.5" width="5" height="11" fill="#f0f6fc" stroke="#5a7aa8" stroke-width="1"/><rect x="11" y="5.5" width="2" height="2" fill="#3a5a90"/><rect x="11" y="10.5" width="2" height="2" fill="#3a5a90"/><rect x="0.5" y="9.5" width="8" height="6" fill="#b8c8e0" stroke="#7a8ab0" stroke-width="1"/></g><line x1="471.5" y1="586" x2="471.5" y2="602" stroke="#808080" stroke-width="1" /><g transform="translate(479,586)" ><rect x="3.5" y="0.5" width="12" height="9" fill="#f0f6fc" stroke="#4a7ab0" stroke-width="1" rx="1"/><line x1="5" y1="3.5" x2="13" y2="3.5" stroke="#4a7ab0" stroke-width="1"/><line x1="5" y1="6" x2="11" y2="6" stroke="#4a7ab0" stroke-width="1"/><rect x="0.5" y="4.5" width="9" height="7" fill="#e4eef8" stroke="#4a7ab0" stroke-width="1" rx="1"/><rect x="2" y="12" width="5" height="3" fill="#4a7ab0"/></g><g transform="translate(502,586)" ><rect x="3.5" y="0.5" width="12" height="9" fill="#f0f6fc" stroke="#4a7ab0" stroke-width="1" rx="1"/><path d="M7,2 L11,7 M11,2 L7,7" fill="none" stroke="#e02020" stroke-width="1.4" /><rect x="0.5" y="4.5" width="9" height="7" fill="#e4eef8" stroke="#4a7ab0" stroke-width="1" rx="1"/><rect x="2" y="12" width="5" height="3" fill="#4a7ab0"/></g><line x1="525.5" y1="586" x2="525.5" y2="602" stroke="#808080" stroke-width="1" /><g transform="translate(535,586)" ><rect x="0.5" y="4.5" width="13" height="10" fill="#f4f8fd" stroke="#8a8a6a" stroke-width="1"/><rect x="1" y="5" width="13" height="2" fill="#3c8ad0"/><path d="M5,10 L11,3" fill="none" stroke="#208030" stroke-width="1.5" /><circle cx="11" cy="3" r="2.5" fill="#30a040"/></g><g transform="translate(558,586)" ><rect x="0.5" y="0.5" width="14" height="11" fill="#e8f0fa" stroke="#2a5aa0" stroke-width="1" rx="1"/><rect x="2" y="2" width="11" height="8" fill="#4a7ac0"/><rect x="3" y="3" width="9" height="5" fill="#8ab0e0"/><rect x="5" y="12" width="5" height="2" fill="#2a5aa0"/><rect x="3" y="14" width="9" height="1.5" fill="#2a5aa0"/></g><path d="M580,592 L587,592 L583.5,596 Z" fill="#000" /><g transform="translate(595,586)" ><rect x="0.5" y="3.5" width="14" height="12" fill="#f4f8fd" stroke="#a08850" stroke-width="1"/><rect x="1" y="4" width="14" height="2" fill="#3c8ad0"/><path d="M11,0.5 L12.5,0.5 L13,2.5 L15,3 L15,4.5 L13,5 L12.5,7 L11,7 L10.5,5 L8.5,4.5 L8.5,3 L10.5,2.5 Z" fill="#fff8d0" stroke="#b08a30" stroke-width="0.8" /></g><path d="M618,592 L625,592 L621.5,596 Z" fill="#000" /><text x="14" y="615.5" font-family='"Liberation Sans", sans-serif' font-size="12" fill="#000" font-weight="normal" textLength="398" lengthAdjust="spacingAndGlyphs" stroke="#000" stroke-width="0.25" >test2_Debug_Segger [GDB SEGGER J-Link Debugging] JLinkGDBServerCL.exe</text><line x1="14" y1="619.5" x2="634" y2="619.5" stroke="#a0a0a0" stroke-width="1" /><clipPath id="cpCons"><rect x="14" y="620" width="604" height="196"/></clipPath><g clip-path="url(#cpCons)"><text x="16.5" y="632.5" font-family='"Liberation Mono", monospace' font-size="12" fill="#000" textLength="406.58" lengthAdjust="spacingAndGlyphs" stroke="#000" stroke-width="0.2">R4 = 00000000, R5 = 00000000, R6 = 00000000, R7 = 00000000</text><text x="16.5" y="647.5" font-family='"Liberation Mono", monospace' font-size="12" fill="#000" textLength="406.58" lengthAdjust="spacingAndGlyphs" stroke="#000" stroke-width="0.2">R8 = 00000000, R9 = 00000000, R10= 00000000, R11= 00000000</text><text x="16.5" y="662.5" font-family='"Liberation Mono", monospace' font-size="12" fill="#000" textLength="406.58" lengthAdjust="spacingAndGlyphs" stroke="#000" stroke-width="0.2">R12= 00000000, R13= 20030000, MSP= 20030000, PSP= 00000000</text><text x="16.5" y="677.5" font-family='"Liberation Mono", monospace' font-size="12" fill="#000" textLength="266.38" lengthAdjust="spacingAndGlyphs" stroke="#000" stroke-width="0.2">R14(LR) = FFFFFFFF, R15(PC) = 000004D4</text><text x="16.5" y="692.5" font-family='"Liberation Mono", monospace' font-size="12" fill="#000" textLength="406.58" lengthAdjust="spacingAndGlyphs" stroke="#000" stroke-width="0.2">XPSR 01000000, APSR 00000000, EPSR 01000000, IPSR 00000000</text><text x="16.5" y="707.5" font-family='"Liberation Mono", monospace' font-size="12" fill="#000" textLength="441.63" lengthAdjust="spacingAndGlyphs" stroke="#000" stroke-width="0.2">CFBP 00000000, CONTROL 00, FAULTMASK 00, BASEPRI 00, PRIMASK 00</text><text x="16.5" y="722.5" font-family='"Liberation Mono", monospace' font-size="12" fill="#000" textLength="147.21" lengthAdjust="spacingAndGlyphs" stroke="#000" stroke-width="0.2">Reading all registers</text><text x="16.5" y="737.5" font-family='"Liberation Mono", monospace' font-size="12" fill="#000" textLength="371.53" lengthAdjust="spacingAndGlyphs" stroke="#000" stroke-width="0.2">Read 4 bytes @ address 0x000004D4 (Data = 0xF000B672)</text><text x="16.5" y="752.5" font-family='"Liberation Mono", monospace' font-size="12" fill="#000" textLength="476.68" lengthAdjust="spacingAndGlyphs" stroke="#000" stroke-width="0.2">Setting breakpoint @ address 0x00000500, Size = 2, BPHandle = 0x0002</text><text x="16.5" y="767.5" font-family='"Liberation Mono", monospace' font-size="12" fill="#000" textLength="154.22" lengthAdjust="spacingAndGlyphs" stroke="#000" stroke-width="0.2">Starting target CPU...</text><text x="16.5" y="782.5" font-family='"Liberation Mono", monospace' font-size="12" fill="#000" textLength="294.42" lengthAdjust="spacingAndGlyphs" stroke="#000" stroke-width="0.2">...Breakpoint reached @ address 0x00000500</text><text x="16.5" y="797.5" font-family='"Liberation Mono", monospace' font-size="12" fill="#000" textLength="147.21" lengthAdjust="spacingAndGlyphs" stroke="#000" stroke-width="0.2">Reading all registers</text><text x="16.5" y="812.5" font-family='"Liberation Mono", monospace' font-size="12" fill="#000" textLength="350.50" lengthAdjust="spacingAndGlyphs" stroke="#000" stroke-width="0.2">Removing breakpoint @ address 0x00000500, Size = 2</text></g><rect x="618" y="620.5" width="16" height="196" fill="#efefef" /><path d="M622.5,632 L626,628.5 L629.5,632 Z" fill="#404040" /><path d="M622.5,804 L626,807.5 L629.5,804 Z" fill="#404040" /><rect x="618.5" y="774.5" width="15" height="19" fill="url(#gThumbV)" stroke="#9a9a9a" stroke-width="1" rx="2" /><line x1="622" y1="781" x2="629" y2="781" stroke="#6a6a6a" stroke-width="0.9" /><line x1="622" y1="783.5" x2="629" y2="783.5" stroke="#6a6a6a" stroke-width="0.9" /><line x1="622" y1="786" x2="629" y2="786" stroke="#6a6a6a" stroke-width="0.9" /><rect x="14" y="816.5" width="604" height="15" fill="#efefef" /><path d="M20,824 L23.5,820.5 L23.5,827.5 Z" fill="#707070" /><path d="M611,824 L607.5,820.5 L607.5,827.5 Z" fill="#707070" /><rect x="618" y="816.5" width="16" height="15" fill="#f4f4f4" /><path d="M641.5,580 L641.5,560 Q641.5,554.5 647,554.5 L750.5,554.5 Q756.0,554.5 756.0,560 L756.0,580" fill="url(#gTabSel)" stroke="#c5c9d2" stroke-width="1" /><g transform="translate(646,559)" ><rect x="0.5" y="0.5" width="14" height="15" fill="#eef4fa" stroke="#707888" stroke-width="1"/><rect x="2" y="2" width="4" height="3" fill="none" stroke="#505868" stroke-width="0.8"/><path d="M2,4 L4,5 L7,1" fill="none" stroke="#303848" stroke-width="0.8" /><line x1="8" y1="3.5" x2="13" y2="3.5" stroke="#5a7ab0" stroke-width="1"/><rect x="2.5" y="8.5" width="4" height="4" fill="none" stroke="#505868" stroke-width="0.8"/><line x1="8" y1="10.5" x2="13" y2="10.5" stroke="#5a7ab0" stroke-width="1"/><text x="0" y="16.5" font-family='"Liberation Sans", sans-serif' font-size="6.5" fill="#101010" font-weight="bold">SWO</text></g><text x="666" y="572" font-family='"Liberation Sans", sans-serif' font-size="12" fill="#000" font-weight="normal" textLength="64.5" lengthAdjust="spacingAndGlyphs" stroke="#000" stroke-width="0.25" >SWO Config</text><path d="M740.0,563.5 L742.5,563.5 L744.5,565.5 L746.5,563.5 L749.0,563.5 L749.0,566 L747.0,568 L749.0,570 L749.0,572.5 L746.5,572.5 L744.5,570.5 L742.5,572.5 L740.0,572.5 L740.0,570 L742.0,568 L740.0,566 Z" fill="#fff" stroke="#444" stroke-width="1" /><rect x="1059.5" y="562.5" width="9" height="3" fill="#fff" stroke="#555" stroke-width="1" /><rect x="1082.5" y="562.5" width="9" height="9" fill="#fff" stroke="#555" stroke-width="1" /><line x1="1082" y1="564.5" x2="1092" y2="564.5" stroke="#555" stroke-width="1" /><rect x="644" y="582" width="443" height="34" fill="url(#gCfg)" /><line x1="644" y1="616.5" x2="1087" y2="616.5" stroke="#a8c0dc" stroke-width="1" /><text x="650" y="604.5" font-family='"Liberation Sans", sans-serif' font-size="15.5" fill="#1c4a80" font-weight="bold" textLength="77" lengthAdjust="spacingAndGlyphs" >Configure</text><circle cx="662" cy="641" r="3.3" fill="#d8d8d8" stroke="#787878" stroke-width="1"/><text x="675" y="643.5" font-family='"Liberation Sans", sans-serif' font-size="12" fill="#000" font-weight="normal" textLength="35" lengthAdjust="spacingAndGlyphs" stroke="#000" stroke-width="0.25" >Profile</text><rect x="800.5" y="629.0" width="25" height="22.5" fill="url(#gBtn)" stroke="#6c6c6c" stroke-width="1" rx="3" /><g transform="translate(806,633.5)" ><rect x="0.5" y="0.5" width="13" height="13" fill="#eef6fc" stroke="#b09050" stroke-width="1"/><rect x="0.5" y="0.5" width="14" height="2.5" fill="#4a90d8"/><rect x="1" y="1" width="13" height="0.8" fill="#a8d0f0"/><rect x="6.5" y="6.5" width="8" height="8" fill="#eef6fc" stroke="#8898b8" stroke-width="1"/><line x1="8.5" y1="10.5" x2="12.5" y2="10.5" stroke="#2a4060" stroke-width="1.5"/><line x1="10.5" y1="8.5" x2="10.5" y2="12.5" stroke="#2a4060" stroke-width="1.5"/></g><rect x="833.5" y="629.0" width="25" height="22.5" fill="url(#gBtn)" stroke="#6c6c6c" stroke-width="1" rx="3" /><g transform="translate(839,633.5)" ><rect x="0.5" y="0.5" width="13" height="13" fill="#eef6fc" stroke="#b09050" stroke-width="1"/><rect x="0.5" y="0.5" width="14" height="2.5" fill="#4a90d8"/><rect x="1" y="1" width="13" height="0.8" fill="#a8d0f0"/><rect x="6.5" y="6.5" width="8" height="8" fill="#eef6fc" stroke="#8898b8" stroke-width="1"/><line x1="8.5" y1="10.5" x2="12.5" y2="10.5" stroke="#2a4060" stroke-width="1.5"/></g><circle cx="662" cy="672" r="3.3" fill="#d8d8d8" stroke="#787878" stroke-width="1"/><text x="675" y="674.5" font-family='"Liberation Sans", sans-serif' font-size="12" fill="#000" font-weight="normal" textLength="119.5" lengthAdjust="spacingAndGlyphs" stroke="#000" stroke-width="0.25" >Performance Counters</text><rect x="800.5" y="660.0" width="25" height="22.5" fill="url(#gBtn)" stroke="#6c6c6c" stroke-width="1" rx="3" /><g transform="translate(806,664.5)" ><rect x="0.5" y="0.5" width="13" height="13" fill="#eef6fc" stroke="#b09050" stroke-width="1"/><rect x="0.5" y="0.5" width="14" height="2.5" fill="#4a90d8"/><rect x="1" y="1" width="13" height="0.8" fill="#a8d0f0"/><rect x="6.5" y="6.5" width="8" height="8" fill="#eef6fc" stroke="#8898b8" stroke-width="1"/><line x1="8.5" y1="10.5" x2="12.5" y2="10.5" stroke="#2a4060" stroke-width="1.5"/><line x1="10.5" y1="8.5" x2="10.5" y2="12.5" stroke="#2a4060" stroke-width="1.5"/></g><rect x="833.5" y="660.0" width="25" height="22.5" fill="url(#gBtn)" stroke="#6c6c6c" stroke-width="1" rx="3" /><g transform="translate(839,664.5)" ><rect x="0.5" y="0.5" width="13" height="13" fill="#eef6fc" stroke="#b09050" stroke-width="1"/><rect x="0.5" y="0.5" width="14" height="2.5" fill="#4a90d8"/><rect x="1" y="1" width="13" height="0.8" fill="#a8d0f0"/><rect x="6.5" y="6.5" width="8" height="8" fill="#eef6fc" stroke="#8898b8" stroke-width="1"/><line x1="8.5" y1="10.5" x2="12.5" y2="10.5" stroke="#2a4060" stroke-width="1.5"/></g><circle cx="662" cy="703" r="3.3" fill="#d8d8d8" stroke="#787878" stroke-width="1"/><text x="675" y="705.5" font-family='"Liberation Sans", sans-serif' font-size="12" fill="#000" font-weight="normal" textLength="61" lengthAdjust="spacingAndGlyphs" stroke="#000" stroke-width="0.25" >Data Watch</text><rect x="800.5" y="691.0" width="25" height="22.5" fill="url(#gBtn)" stroke="#6c6c6c" stroke-width="1" rx="3" /><g transform="translate(806,695.5)" ><rect x="0.5" y="0.5" width="13" height="13" fill="#eef6fc" stroke="#b09050" stroke-width="1"/><rect x="0.5" y="0.5" width="14" height="2.5" fill="#4a90d8"/><rect x="1" y="1" width="13" height="0.8" fill="#a8d0f0"/><rect x="6.5" y="6.5" width="8" height="8" fill="#eef6fc" stroke="#8898b8" stroke-width="1"/><line x1="8.5" y1="10.5" x2="12.5" y2="10.5" stroke="#2a4060" stroke-width="1.5"/><line x1="10.5" y1="8.5" x2="10.5" y2="12.5" stroke="#2a4060" stroke-width="1.5"/></g><rect x="833.5" y="691.0" width="25" height="22.5" fill="url(#gBtn)" stroke="#6c6c6c" stroke-width="1" rx="3" /><g transform="translate(839,695.5)" ><rect x="0.5" y="0.5" width="13" height="13" fill="#eef6fc" stroke="#b09050" stroke-width="1"/><rect x="0.5" y="0.5" width="14" height="2.5" fill="#4a90d8"/><rect x="1" y="1" width="13" height="0.8" fill="#a8d0f0"/><rect x="6.5" y="6.5" width="8" height="8" fill="#eef6fc" stroke="#8898b8" stroke-width="1"/><line x1="8.5" y1="10.5" x2="12.5" y2="10.5" stroke="#2a4060" stroke-width="1.5"/></g><circle cx="662" cy="734" r="3.3" fill="#d8d8d8" stroke="#787878" stroke-width="1"/><text x="675" y="736.5" font-family='"Liberation Sans", sans-serif' font-size="12" fill="#000" font-weight="normal" textLength="51.5" lengthAdjust="spacingAndGlyphs" stroke="#000" stroke-width="0.25" >Interrupts</text><rect x="800.5" y="722.0" width="25" height="22.5" fill="url(#gBtn)" stroke="#6c6c6c" stroke-width="1" rx="3" /><g transform="translate(806,726.5)" ><rect x="0.5" y="0.5" width="13" height="13" fill="#eef6fc" stroke="#b09050" stroke-width="1"/><rect x="0.5" y="0.5" width="14" height="2.5" fill="#4a90d8"/><rect x="1" y="1" width="13" height="0.8" fill="#a8d0f0"/><rect x="6.5" y="6.5" width="8" height="8" fill="#eef6fc" stroke="#8898b8" stroke-width="1"/><line x1="8.5" y1="10.5" x2="12.5" y2="10.5" stroke="#2a4060" stroke-width="1.5"/><line x1="10.5" y1="8.5" x2="10.5" y2="12.5" stroke="#2a4060" stroke-width="1.5"/></g><rect x="833.5" y="722.0" width="25" height="22.5" fill="url(#gBtn)" stroke="#6c6c6c" stroke-width="1" rx="3" /><g transform="translate(839,726.5)" ><rect x="0.5" y="0.5" width="13" height="13" fill="#eef6fc" stroke="#b09050" stroke-width="1"/><rect x="0.5" y="0.5" width="14" height="2.5" fill="#4a90d8"/><rect x="1" y="1" width="13" height="0.8" fill="#a8d0f0"/><rect x="6.5" y="6.5" width="8" height="8" fill="#eef6fc" stroke="#8898b8" stroke-width="1"/><line x1="8.5" y1="10.5" x2="12.5" y2="10.5" stroke="#2a4060" stroke-width="1.5"/></g><rect x="649" y="756" width="430" height="4" fill="url(#gSepBar)" /><text x="655" y="786.5" font-family='"Liberation Sans", sans-serif' font-size="12" fill="#000" font-weight="normal" textLength="63.5" lengthAdjust="spacingAndGlyphs" stroke="#000" stroke-width="0.25" >Clock Speed</text><rect x="725.5" y="771.5" width="48" height="22" fill="#f2f2f2" stroke="#c4c4c4" stroke-width="1" rx="2.5" /><text x="731" y="786.5" font-family='"Liberation Sans", sans-serif' font-size="12" fill="#8e8e8e" font-weight="normal" textLength="37" lengthAdjust="spacingAndGlyphs" stroke="#8e8e8e" stroke-width="0.25" >change</text><rect x="649" y="805" width="430" height="4" fill="url(#gSepBar)" /><rect x="1088" y="582" width="16" height="234" fill="#f0f0f0" /><path d="M1092.5,593 L1096,589.5 L1099.5,593 Z" fill="#404040" /><path d="M1092.5,806.5 L1096,810 L1099.5,806.5 Z" fill="#404040" /><rect x="1088.5" y="600.5" width="14" height="119" fill="url(#gThumbV)" stroke="#8a8a8a" stroke-width="1" rx="2" /><line x1="1092" y1="656" x2="1099" y2="656" stroke="#6a6a6a" stroke-width="0.9" /><line x1="1092" y1="658.5" x2="1099" y2="658.5" stroke="#6a6a6a" stroke-width="0.9" /><line x1="1092" y1="661" x2="1099" y2="661" stroke="#6a6a6a" stroke-width="0.9" /><rect x="644" y="816" width="460" height="16" fill="url(#pStripe)" /><text x="645" y="828.5" font-family='"Liberation Sans", sans-serif' font-size="12" fill="#000" font-weight="normal" textLength="143" lengthAdjust="spacingAndGlyphs" stroke="#000" stroke-width="0.25" >Note: this functionality is a </text><text x="788" y="828.5" font-family='"Liberation Sans", sans-serif' font-size="12" fill="#0a5ad0" font-weight="normal" textLength="107" lengthAdjust="spacingAndGlyphs" stroke="#0a5ad0" stroke-width="0.25" >Technology Preview</text><line x1="788" y1="830.5" x2="895" y2="830.5" stroke="#0a5ad0" stroke-width="1" /><rect x="571" y="844" width="2" height="2" fill="#8a8a7a" /><rect x="571" y="848" width="2" height="2" fill="#8a8a7a" /><rect x="571" y="852" width="2" height="2" fill="#8a8a7a" /><rect x="571" y="856" width="2" height="2" fill="#8a8a7a" /><rect x="856" y="844" width="2" height="2" fill="#8a8a7a" /><rect x="856" y="848" width="2" height="2" fill="#8a8a7a" /><rect x="856" y="852" width="2" height="2" fill="#8a8a7a" /><rect x="856" y="856" width="2" height="2" fill="#8a8a7a" /><text x="865" y="857" font-family='"Liberation Sans", sans-serif' font-size="12" fill="#0a5ad0" font-weight="normal" textLength="25.5" lengthAdjust="spacingAndGlyphs" stroke="#0a5ad0" stroke-width="0.25" >test2</text><line x1="865" y1="859.5" x2="890.5" y2="859.5" stroke="#0a5ad0" stroke-width="1" /></svg></body></html>
